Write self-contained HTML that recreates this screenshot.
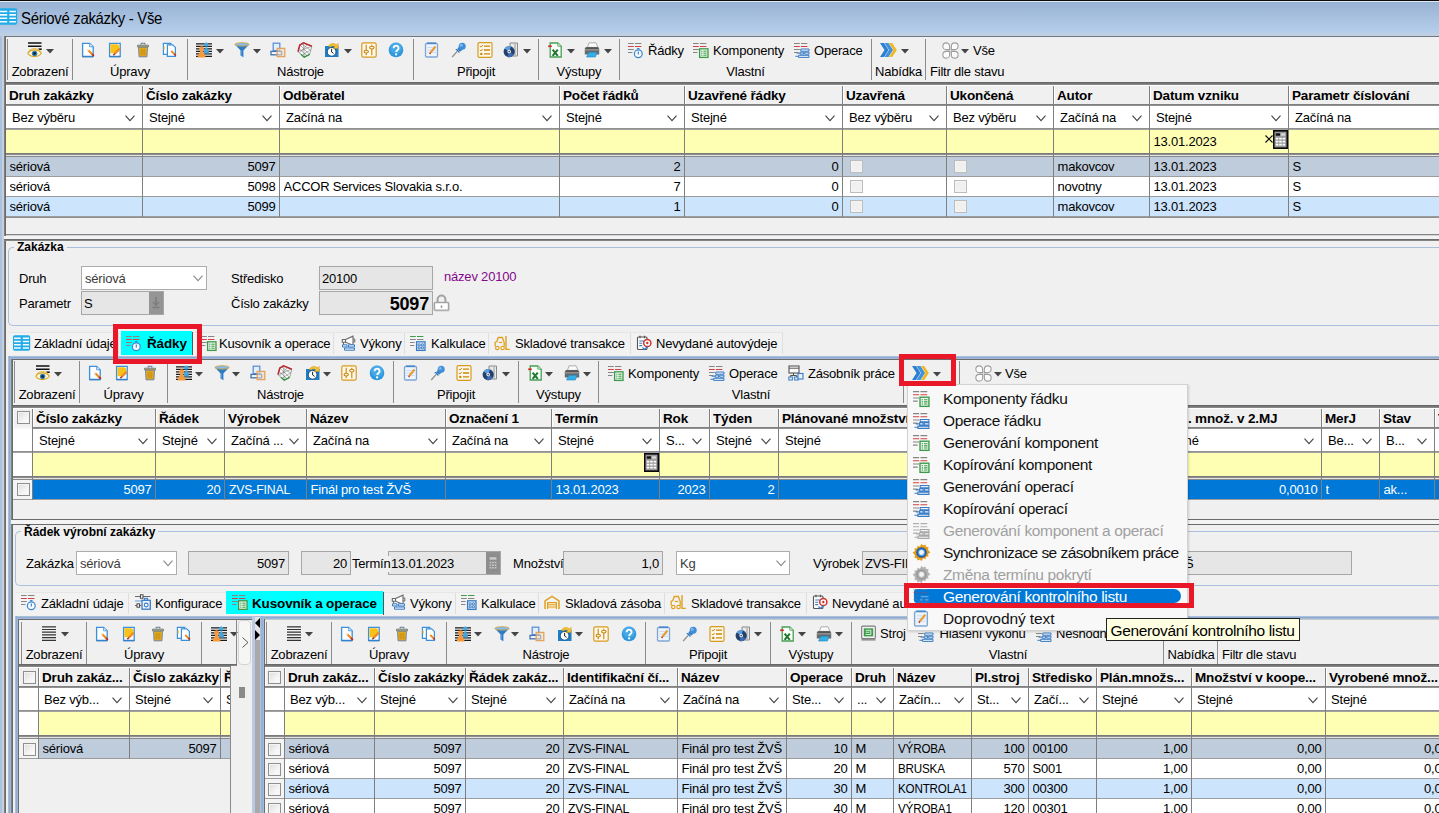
<!DOCTYPE html>
<html><head><meta charset="utf-8"><title>Sériové zakázky - Vše</title>
<style>
html,body{margin:0;padding:0;}
body{width:1439px;height:813px;overflow:hidden;background:#f0f0f0;font-family:"Liberation Sans",sans-serif;font-size:13px;color:#000;}
#app{position:relative;width:1439px;height:813px;overflow:hidden;}
#app div,#app svg{position:absolute;box-sizing:content-box;}
.t{white-space:nowrap;line-height:16px;height:16px;font-size:13px;letter-spacing:-0.2px;margin-top:1px;}
.b{font-weight:bold;font-size:13.5px;letter-spacing:-0.15px;}
.c{text-align:center;}
.i{overflow:visible;}
.clip{overflow:hidden;}
.m{font-size:15.5px;line-height:20px;height:20px;letter-spacing:-0.35px;}

</style></head>
<body>
<div id="app">
<div style="left:0px;top:0px;width:1439px;height:33px;background:linear-gradient(#96b0d3,#a5bedd 45%,#b5ceeb)"></div>
<div style="left:0px;top:33px;width:1439px;height:3px;background:#bfcfe0"></div>
<div style="left:0px;top:0px;width:1439px;height:1px;background:#0c0c0c"></div>
<div style="left:0px;top:1px;width:1439px;height:1px;background:linear-gradient(#3a3a3a 0 50%,#e3e9f2 50%)"></div>
<div style="left:0px;top:36px;width:2px;height:777px;background:#a9c2e0"></div>
<div style="left:2px;top:36px;width:2px;height:777px;background:#c6d0dd"></div>
<div style="left:4px;top:36px;width:1435px;height:1px;background:#6d7986"></div>
<div style="left:4px;top:36px;width:2px;height:777px;background:linear-gradient(90deg,#8a8a8a,#5f5f5f)"></div>
<svg class="i" style="left:0px;top:8px;" width="17" height="17" viewBox="0 0 16 16"><rect x="-1" y="0.300" width="17.200" height="15.400" rx="1.800" fill="#22abe8"/><path d="M0 3.300h6.800M8.800 3.300h6.200M0 6.500h6.800M8.800 6.500h6.200M0 9.700h6.800M8.800 9.700h6.200M0 12.900h6.800M8.800 12.900h6.200" stroke="#f4fbff" stroke-width="1.500"/></svg>
<div class="t" style="left:21px;top:6px;font-size:16.5px;line-height:22px;height:22px;letter-spacing:-0.35px;transform:scaleX(0.905);transform-origin:0 0">Sériové zakázky - Vše</div>
<div style="left:7px;top:39px;width:1px;height:41px;background:#8c8c8c"></div>
<div style="left:72px;top:39px;width:1px;height:41px;background:#8c8c8c"></div>
<div style="left:187px;top:39px;width:1px;height:41px;background:#8c8c8c"></div>
<div style="left:413px;top:39px;width:1px;height:41px;background:#8c8c8c"></div>
<div style="left:538px;top:39px;width:1px;height:41px;background:#8c8c8c"></div>
<div style="left:619px;top:39px;width:1px;height:41px;background:#8c8c8c"></div>
<div style="left:871px;top:39px;width:1px;height:41px;background:#8c8c8c"></div>
<div style="left:925px;top:39px;width:1px;height:41px;background:#8c8c8c"></div>
<svg class="i" style="left:27px;top:42px;" width="16" height="16" viewBox="0 0 16 16"><path d="M1 1h13.5M1 4.2h13.5" stroke="#111" stroke-width="1.6"/><path d="M11.5 7.2h3.2" stroke="#111" stroke-width="1.6"/><path d="M0.8 11.3c2.6-4.6 10.6-4.6 13.6 0c-3.2 4.4-11 4.4-13.6 0z" fill="#fdf6d8" stroke="#d9a520" stroke-width="1.1"/><path d="M1.5 9.2c3-3.4 9-3.6 12 0" fill="none" stroke="#e6b93a" stroke-width="1"/><circle cx="7.6" cy="11.4" r="2.7" fill="#2f7fb4"/><circle cx="7.6" cy="11.4" r="1.3" fill="#0a1a28"/></svg>
<svg class="i" style="left:45.5px;top:49px" width="8" height="4.500" viewBox="0 0 8 4.500"><path d="M0 0h8L4 4.500z" fill="#444"/></svg>
<div class="t c" style="left:-110.0px;width:300px;top:63px;">Zobrazení</div>
<svg class="i" style="left:80px;top:42px;" width="16" height="16" viewBox="0 0 16 16"><path d="M2.6 1.4h7l3.6 3.4v9.6H2.6z" fill="#fdfeff" stroke="#3c8fd9" stroke-width="1.3"/><path d="M9.6 1.4v3.4h3.6" fill="#dcebf9" stroke="#3c8fd9" stroke-width=".8"/><path d="M2.4 14.9h11" stroke="#2f79c0" stroke-width="1"/><path d="M8.3 8.3l4.2 4.2" stroke="#f08a24" stroke-width="2.2"/><path d="M12 12l1.9 1.9" stroke="#b5321f" stroke-width="1.8"/><path d="M7.4 7.4l1.3 1.3" stroke="#f6d7a8" stroke-width="1.6"/></svg>
<svg class="i" style="left:107px;top:42px;" width="16" height="16" viewBox="0 0 16 16"><path d="M2.6 1.4h10.6v13H2.6z" fill="#fdfeff" stroke="#3c8fd9" stroke-width="1.3"/><path d="M3.4 2.2h7.2l1.8 1.8v4.4L8 11.2H3.4z" fill="#f9c21a"/><path d="M2.4 14.9h11" stroke="#2f79c0" stroke-width="1"/><path d="M12.8 6.6l-5 5" stroke="#f08a24" stroke-width="2.2"/><path d="M7.9 11.5l-1.6 1.7" stroke="#b5321f" stroke-width="1.6"/></svg>
<svg class="i" style="left:135px;top:42px;" width="16" height="16" viewBox="0 0 16 16"><path d="M6.2 2.6V1.2h3.6v1.4" fill="none" stroke="#6b7f96" stroke-width="1.1"/><path d="M2.6 3.2h10.8v1.8H2.6z" fill="#f4bd2a" stroke="#6b7f96" stroke-width="1"/><path d="M3.6 5.2h8.8l-.5 9.6H4.1z" fill="#f0b31e" stroke="#6b7f96" stroke-width="1"/><path d="M6.1 6.6v7M8 6.6v7M9.9 6.6v7" stroke="#b98412" stroke-width="1"/></svg>
<svg class="i" style="left:162px;top:42px;" width="16" height="16" viewBox="0 0 16 16"><path d="M1.4 1.4h7.4v11H1.4z" fill="#fdfeff" stroke="#3c8fd9" stroke-width="1.2"/><path d="M2.2 4.5v3" stroke="#f4bd2a" stroke-width="1.2"/><path d="M5.4 2.8h5.2l2.8 2.6v9H5.4z" fill="#fdfeff" stroke="#3c8fd9" stroke-width="1.2"/><path d="M9.3 9l3.4 3.4" stroke="#f08a24" stroke-width="2"/><path d="M12.3 12l1.6 1.6" stroke="#b5321f" stroke-width="1.6"/></svg>
<div class="t c" style="left:-20.0px;width:300px;top:63px;">Úpravy</div>
<svg class="i" style="left:196px;top:42px;" width="16" height="16" viewBox="0 0 16 16"><path d="M0 1.8h16M0 4.3h16M0 6.8h16M0 9.3h16M0 11.8h16M0 14.3h16" stroke="#1a1a1a" stroke-width="1.35"/><circle cx="10.3" cy="2.6" r="2.2" fill="#45a6dc"/><path d="M7.4 11.5c.3-2.8 1.5-3.6 2-6.2h1.8c.5 2.6 1.7 3.4 2 6.2z" fill="#45a6dc"/><circle cx="5.6" cy="6.6" r="2.4" fill="#f7993a"/><path d="M1.6 15.6c.3-3 2-4 2.6-6.8h2.8c.6 2.8 2.3 3.8 2.6 6.8z" fill="#f7993a"/></svg>
<svg class="i" style="left:215.5px;top:49px" width="8" height="4.500" viewBox="0 0 8 4.500"><path d="M0 0h8L4 4.500z" fill="#444"/></svg>
<svg class="i" style="left:234px;top:42px;" width="16" height="16" viewBox="0 0 16 16"><path d="M0.9 2.4L6.6 8.6v5l2.8 1.6V8.6l5.7-6.2z" fill="#2f7cc4"/><path d="M6.6 8.6v5l1.2.7V8.6z" fill="#5aa0e0"/><ellipse cx="8" cy="2.4" rx="7.1" ry="1.7" fill="#86bdee" stroke="#d0a744" stroke-width="0.9"/></svg>
<svg class="i" style="left:252.5px;top:49px" width="8" height="4.500" viewBox="0 0 8 4.500"><path d="M0 0h8L4 4.500z" fill="#444"/></svg>
<svg class="i" style="left:270px;top:42px;" width="16" height="16" viewBox="0 0 16 16"><rect x="3.2" y="1.2" width="6.6" height="7.4" fill="#e4eefa" stroke="#5b92d8" stroke-width="1.3"/><rect x="1" y="9.4" width="10.6" height="3.4" fill="#f3f7fc" stroke="#3f73b5" stroke-width="1.3"/><rect x="7.2" y="6.4" width="7.6" height="8.2" fill="#f6dfc0" fill-opacity=".55" stroke="#e5a25c" stroke-width="1.3"/></svg>
<svg class="i" style="left:297px;top:42px;" width="16" height="16" viewBox="0 0 16 16"><path d="M6.5 0.8l8.3 3.4l-2.2 8.2l-5.4 2.8L1 9.6L2.8 3z" fill="#fcfcfc" stroke="#8b8b8b" stroke-width="0.8"/><path d="M1 9.6L2.8 3l3.7-2.2l8.3 3.4" fill="none" stroke="#c4232b" stroke-width="1.5"/><path d="M4 12.2l3.2 3l5.4-2.8" fill="none" stroke="#2b9a3c" stroke-width="1.5"/><path d="M2.8 3l9.8 9.4M14.8 4.2L1 9.6M6.5.8l.7 14.4M4.6 1.9l9.2 6.4M10.6 2.5L2.6 11M12.7 8.3L5 13.4M1.9 6.3l8 7.4" stroke="#6f6f6f" stroke-width="0.55"/></svg>
<svg class="i" style="left:324px;top:42px;" width="16" height="16" viewBox="0 0 16 16"><rect x="1" y="4" width="13.5" height="11" fill="#1f7fc4"/><circle cx="7.6" cy="9.8" r="4.4" fill="#fff" stroke="#0f4f85" stroke-width="1"/><path d="M7.6 6.8v3.2l2 1.4" fill="none" stroke="#222" stroke-width="1"/><path d="M4.5 4.2C6 1.2 10 .8 12.5 3l1.6-1.6v5h-5L10.8 4.7C9.5 3.4 7.5 3.6 6.4 5z" fill="#f7c32e" stroke="#c98f0e" stroke-width=".5"/></svg>
<svg class="i" style="left:343.5px;top:49px" width="8" height="4.500" viewBox="0 0 8 4.500"><path d="M0 0h8L4 4.500z" fill="#444"/></svg>
<svg class="i" style="left:361px;top:42px;" width="16" height="16" viewBox="0 0 16 16"><rect x="0.8" y="0.8" width="14.4" height="14.4" rx="1.6" fill="#fdf8ea" stroke="#d89a1e" stroke-width="1.2"/><path d="M5.2 2.8v10.4M10.8 2.8v10.4" stroke="#c9860e" stroke-width="1.1"/><ellipse cx="5.2" cy="9.6" rx="2.2" ry="1.4" fill="#fdf8ea" stroke="#c9860e" stroke-width="1.1"/><ellipse cx="10.8" cy="5.6" rx="2.2" ry="1.4" fill="#fdf8ea" stroke="#c9860e" stroke-width="1.1"/></svg>
<svg class="i" style="left:388px;top:42px;" width="16" height="16" viewBox="0 0 16 16"><circle cx="8" cy="8" r="7.3" fill="#2f97dc"/><circle cx="8" cy="6" r="6" fill="#56b4ee" fill-opacity=".55"/><path d="M5.6 6.2c0-3.4 5-3.4 5 0c0 1.8-2.4 1.8-2.4 3.8" fill="none" stroke="#fff" stroke-width="1.9"/><circle cx="8.1" cy="12.4" r="1.15" fill="#fff"/></svg>
<div class="t c" style="left:150.5px;width:300px;top:63px;">Nástroje</div>
<svg class="i" style="left:424px;top:42px;" width="16" height="16" viewBox="0 0 16 16"><rect x="1.5" y="1.5" width="12" height="13.5" rx="1" fill="#eef4fb" stroke="#7fa7d6" stroke-width="1.3"/><path d="M3 1.2h9" stroke="#4a86c8" stroke-width="1.6"/><path d="M3.5 5.5h8M3.5 8h8M3.5 10.5h8" stroke="#c3d5ea" stroke-width=".8"/><path d="M6.5 10.5l5-6" stroke="#e89b2e" stroke-width="2"/><path d="M6.5 10.5l-.8 1.6" stroke="#c03a2b" stroke-width="1.4"/></svg>
<svg class="i" style="left:451px;top:42px;" width="16" height="16" viewBox="0 0 16 16"><path d="M1.2 15L6.2 9.4" stroke="#8f8f8f" stroke-width="1.3"/><path d="M4.4 7.2c1.8-.6 4.6 2.2 4 4z" fill="#2a6fb0"/><path d="M6.2 7l2.2-2.8l3.4 3.4L9 9.8z" fill="#3683c8"/><circle cx="11.2" cy="4.2" r="3.5" fill="#3f8fd8"/><circle cx="10.2" cy="3.2" r="1.5" fill="#7db8ee"/></svg>
<svg class="i" style="left:477px;top:42px;" width="16" height="16" viewBox="0 0 16 16"><rect x="1" y="0.7" width="14" height="14.6" rx="1.2" fill="#fdf8ea" stroke="#d89a1e" stroke-width="1.2"/><path d="M7 4.1h6M7 8h6M7 11.9h6" stroke="#c9860e" stroke-width="1.3"/><path d="M2.8 4l1.1 1.1L5.8 3M2.8 7.9L3.9 9l1.9-2.1" fill="none" stroke="#c9860e" stroke-width="1"/><circle cx="4.3" cy="11.9" r="1.2" fill="#c9860e"/></svg>
<svg class="i" style="left:503px;top:42px;" width="16" height="16" viewBox="0 0 16 16"><path d="M7 1h7.5v13H7z" fill="#e9e9e9" stroke="#8a8a8a" stroke-width="1"/><path d="M12 1v13" stroke="#b5b5b5" stroke-width="1.5"/><circle cx="6.2" cy="9.6" r="5.6" fill="#24406e"/><path d="M6.2 9.6L1.6 6.6A5.6 5.6 0 0 1 8 4.3z" fill="#5aa0e0"/><path d="M6.2 9.6l4.6 3A5.6 5.6 0 0 1 4.4 14.9z" fill="#3b6cb0"/><circle cx="6.2" cy="9.6" r="1.8" fill="#f1f1f1"/><circle cx="6.2" cy="9.6" r=".8" fill="#24406e"/></svg>
<svg class="i" style="left:522.5px;top:49px" width="8" height="4.500" viewBox="0 0 8 4.500"><path d="M0 0h8L4 4.500z" fill="#444"/></svg>
<div class="t c" style="left:326.0px;width:300px;top:63px;">Připojit</div>
<svg class="i" style="left:547px;top:42px;" width="16" height="16" viewBox="0 0 16 16"><path d="M3.2 1h7.6l3.400 3.200V15H3.200z" fill="#fdfffd" stroke="#45a052" stroke-width="1.3"/><path d="M10.800 1v3.200h3.400" fill="#d9efdb" stroke="#45a052" stroke-width=".8"/><rect x="1.200" y="3.400" width="3.600" height="1.700" fill="#d92a2a"/><path d="M5.600 7.600l5.200 6.200M10.800 7.600l-5.200 6.200" stroke="#1f7a31" stroke-width="2.100"/></svg>
<svg class="i" style="left:566.5px;top:49px" width="8" height="4.500" viewBox="0 0 8 4.500"><path d="M0 0h8L4 4.500z" fill="#444"/></svg>
<svg class="i" style="left:584px;top:42px;" width="16" height="16" viewBox="0 0 16 16"><path d="M5 0.8h7l2 4.6H3.4z" fill="#fafafa" stroke="#9a9a9a" stroke-width=".8"/><path d="M.8 7c0-1.2.8-2 2-2h10.4c1.2 0 2 .8 2 2v5.400H.8z" fill="#6a6a6a"/><path d="M.8 7.800h14.400" stroke="#9c9c9c" stroke-width="1.2"/><path d="M2 6.200h12" stroke="#4a4a4a" stroke-width="1"/><path d="M4.800 10.200h8.400L11.400 15H2.600z" fill="#35aee6" stroke="#1d84bd" stroke-width=".6"/></svg>
<svg class="i" style="left:603.5px;top:49px" width="8" height="4.500" viewBox="0 0 8 4.500"><path d="M0 0h8L4 4.500z" fill="#444"/></svg>
<div class="t c" style="left:429.0px;width:300px;top:63px;">Výstupy</div>
<svg class="i" style="left:628px;top:42px;" width="16" height="16" viewBox="0 0 16 16"><path d="M0 1.500h5.800M7 1.500h6.400M0 7.500h5.800M0 10.500h4.400" stroke="#858585" stroke-width="1.100"/><path d="M0 4.500h5.800M7 4.500h6.400" stroke="#d3403f" stroke-width="1.100"/><circle cx="10.300" cy="11.700" r="3.900" fill="#f7fbff" stroke="#3a86d0" stroke-width="1.200"/><path d="M10.300 9.500v2.900M9.100 6.700h2.400" stroke="#3a86d0" stroke-width="1.200"/></svg>
<div class="t" style="left:648px;top:42px;">Řádky</div>
<svg class="i" style="left:693px;top:42px;" width="16" height="16" viewBox="0 0 16 16"><path d="M0 1.500h5.800M7 1.500h6.400M0 7.500h5.800M0 10.500h4.400" stroke="#858585" stroke-width="1.100"/><path d="M0 4.500h5.800M7 4.500h6.400" stroke="#d3403f" stroke-width="1.100"/><rect x="6.600" y="6.800" width="8.400" height="8.600" fill="#eaf6ea" stroke="#3d9a4b" stroke-width="1.300"/><path d="M8.200 9.200h1.200M10.400 9.200h3.200M8.200 11.200h1.200M10.400 11.200h3.200M8.200 13.200h1.200M10.400 13.200h3.200" stroke="#3d9a4b" stroke-width="1"/></svg>
<div class="t" style="left:713px;top:42px;">Komponenty</div>
<svg class="i" style="left:794px;top:42px;" width="16" height="16" viewBox="0 0 16 16"><path d="M0 1.500h5.800M7 1.500h6.400M0 7.500h5.800M0 10.500h4.400" stroke="#858585" stroke-width="1.100"/><path d="M0 4.500h5.800M7 4.500h6.400" stroke="#d3403f" stroke-width="1.100"/><path d="M6.800 7h8.200v2.200H6.800zM6.200 10.200h3.300v2H6.200zM10.700 10.200h4.300v2h-4.300zM4.600 13.300h10.400v2.100H4.600z" fill="#e7f0fa" stroke="#3a7cc4" stroke-width="1"/><path d="M2.600 11.200h3.600M1.400 14.300h3.200" stroke="#3a7cc4" stroke-width="1"/></svg>
<div class="t" style="left:814px;top:42px;">Operace</div>
<div class="t c" style="left:595.5px;width:300px;top:63px;">Vlastní</div>
<svg class="i" style="left:880px;top:42px;" width="16" height="16" viewBox="0 0 16 16"><path d="M0 1h4l4.5 7L4 15H0l4.5-7z" fill="#2d7fd0"/><path d="M4.5 1h4L13 8l-4.5 7h-4L9 8z" fill="#3d93e0"/><path d="M9 1h3.2L16.8 8l-4.6 7H9l4.5-7z" fill="#f3b61f"/></svg>
<svg class="i" style="left:900.5px;top:49px" width="8" height="4.500" viewBox="0 0 8 4.500"><path d="M0 0h8L4 4.500z" fill="#444"/></svg>
<div class="t c" style="left:748.5px;width:300px;top:63px;">Nabídka</div>
<svg class="i" style="left:941.5px;top:41.5px;" width="17" height="17" viewBox="0 0 16 16"><path d="M7.200 7.200V4a3.200 3.200 0 1 0-3.200 3.200zM8.800 7.200H12A3.200 3.200 0 1 0 8.800 4zM8.800 8.800V12A3.200 3.200 0 1 0 12 8.800zM7.200 8.800H4A3.200 3.200 0 1 0 7.200 12z" fill="#fbfbfb" stroke="#9c9c9c" stroke-width="1"/></svg>
<svg class="i" style="left:960.5px;top:49px" width="8" height="4.500" viewBox="0 0 8 4.500"><path d="M0 0h8L4 4.500z" fill="#444"/></svg>
<div class="t" style="left:973px;top:42px;">Vše</div>
<div class="t" style="left:930px;top:63px;">Filtr dle stavu</div>
<div style="left:6px;top:82px;width:1433px;height:3px;background:linear-gradient(#5f5f5f,#8f8f8f)"></div>
<div style="left:6px;top:85px;width:1433px;height:19px;background:#f0f0f0"></div>
<div style="left:6px;top:104px;width:1433px;height:2px;background:linear-gradient(#777,#9a9a9a)"></div>
<div style="left:6px;top:106px;width:1433px;height:22px;background:#fff"></div>
<div style="left:6px;top:128px;width:1433px;height:2px;background:linear-gradient(#8a8a8a,#a8a8a8)"></div>
<div style="left:6px;top:130px;width:1433px;height:23px;background:#ffffb4"></div>
<div style="left:6px;top:153px;width:1433px;height:4px;background:linear-gradient(#7a7a7a 0 25%,#8e8e8e 25% 50%,#e4e4e4 50% 75%,#8a8a8a 75%)"></div>
<div style="left:6px;top:157px;width:1433px;height:19px;background:#bfccdb"></div>
<div style="left:6px;top:176px;width:1433px;height:1px;background:#9c9c9c"></div>
<div style="left:6px;top:177px;width:1433px;height:19px;background:#fff"></div>
<div style="left:6px;top:196px;width:1433px;height:1px;background:#9c9c9c"></div>
<div style="left:6px;top:197px;width:1433px;height:19px;background:#cce4fc"></div>
<div style="left:6px;top:216px;width:1433px;height:1px;background:#9c9c9c"></div>
<div style="left:142px;top:85px;width:1px;height:132px;background:#7f7f7f"></div>
<div style="left:143px;top:85px;width:1px;height:19px;background:#fff"></div>
<div style="left:279px;top:85px;width:1px;height:132px;background:#7f7f7f"></div>
<div style="left:280px;top:85px;width:1px;height:19px;background:#fff"></div>
<div style="left:559px;top:85px;width:1px;height:132px;background:#7f7f7f"></div>
<div style="left:560px;top:85px;width:1px;height:19px;background:#fff"></div>
<div style="left:684px;top:85px;width:1px;height:132px;background:#7f7f7f"></div>
<div style="left:685px;top:85px;width:1px;height:19px;background:#fff"></div>
<div style="left:842px;top:85px;width:1px;height:132px;background:#7f7f7f"></div>
<div style="left:843px;top:85px;width:1px;height:19px;background:#fff"></div>
<div style="left:946px;top:85px;width:1px;height:132px;background:#7f7f7f"></div>
<div style="left:947px;top:85px;width:1px;height:19px;background:#fff"></div>
<div style="left:1053px;top:85px;width:1px;height:132px;background:#7f7f7f"></div>
<div style="left:1054px;top:85px;width:1px;height:19px;background:#fff"></div>
<div style="left:1149px;top:85px;width:1px;height:132px;background:#7f7f7f"></div>
<div style="left:1150px;top:85px;width:1px;height:19px;background:#fff"></div>
<div style="left:1288px;top:85px;width:1px;height:132px;background:#7f7f7f"></div>
<div style="left:1289px;top:85px;width:1px;height:19px;background:#fff"></div>
<div style="left:6px;top:85px;width:1px;height:19px;background:#fff"></div>
<div style="left:6px;top:85px;width:1433px;height:1px;background:#fff"></div>
<div class="t b clip" style="left:9px;top:87px;width:133px">Druh zakázky</div>
<div class="t clip" style="left:12px;top:109px;width:130px">Bez výběru</div>
<svg class="i" style="left:125px;top:115px" width="10" height="7" viewBox="0 0 10 7"><path d="M0.500 0.600L5 5.600l4.500-5" fill="none" stroke="#444" stroke-width="1.100"/></svg>
<div class="t clip" style="left:9.5px;top:158px;width:132.5px;color:#000">sériová</div>
<div class="t clip" style="left:9.5px;top:178px;width:132.5px;color:#000">sériová</div>
<div class="t clip" style="left:9.5px;top:198px;width:132.5px;color:#000">sériová</div>
<div class="t b clip" style="left:146px;top:87px;width:133px">Číslo zakázky</div>
<div class="t clip" style="left:149px;top:109px;width:130px">Stejné</div>
<svg class="i" style="left:262px;top:115px" width="10" height="7" viewBox="0 0 10 7"><path d="M0.500 0.600L5 5.600l4.500-5" fill="none" stroke="#444" stroke-width="1.100"/></svg>
<div class="t" style="left:143px;top:158px;width:132.5px;text-align:right;color:#000">5097</div>
<div class="t" style="left:143px;top:178px;width:132.5px;text-align:right;color:#000">5098</div>
<div class="t" style="left:143px;top:198px;width:132.5px;text-align:right;color:#000">5099</div>
<div class="t b clip" style="left:283px;top:87px;width:276px">Odběratel</div>
<div class="t clip" style="left:286px;top:109px;width:273px">Začíná na</div>
<svg class="i" style="left:542px;top:115px" width="10" height="7" viewBox="0 0 10 7"><path d="M0.500 0.600L5 5.600l4.500-5" fill="none" stroke="#444" stroke-width="1.100"/></svg>
<div class="t clip" style="left:283.5px;top:178px;width:275.5px;color:#000">ACCOR Services Slovakia s.r.o.</div>
<div class="t b clip" style="left:563px;top:87px;width:121px">Počet řádků</div>
<div class="t clip" style="left:566px;top:109px;width:118px">Stejné</div>
<svg class="i" style="left:667px;top:115px" width="10" height="7" viewBox="0 0 10 7"><path d="M0.500 0.600L5 5.600l4.500-5" fill="none" stroke="#444" stroke-width="1.100"/></svg>
<div class="t" style="left:560px;top:158px;width:120.5px;text-align:right;color:#000">2</div>
<div class="t" style="left:560px;top:178px;width:120.5px;text-align:right;color:#000">7</div>
<div class="t" style="left:560px;top:198px;width:120.5px;text-align:right;color:#000">1</div>
<div class="t b clip" style="left:688px;top:87px;width:154px">Uzavřené řádky</div>
<div class="t clip" style="left:691px;top:109px;width:151px">Stejné</div>
<svg class="i" style="left:825px;top:115px" width="10" height="7" viewBox="0 0 10 7"><path d="M0.500 0.600L5 5.600l4.500-5" fill="none" stroke="#444" stroke-width="1.100"/></svg>
<div class="t" style="left:685px;top:158px;width:153.5px;text-align:right;color:#000">0</div>
<div class="t" style="left:685px;top:178px;width:153.5px;text-align:right;color:#000">0</div>
<div class="t" style="left:685px;top:198px;width:153.5px;text-align:right;color:#000">0</div>
<div class="t b clip" style="left:846px;top:87px;width:100px">Uzavřená</div>
<div class="t clip" style="left:849px;top:109px;width:97px">Bez výběru</div>
<svg class="i" style="left:929px;top:115px" width="10" height="7" viewBox="0 0 10 7"><path d="M0.500 0.600L5 5.600l4.500-5" fill="none" stroke="#444" stroke-width="1.100"/></svg>
<div style="left:850px;top:160px;width:11px;height:11px;border:1px solid #bcbcbc;background:#f0f0f0;box-shadow:inset 0 0 0 1px #f4f4f4"></div>
<div style="left:850px;top:180px;width:11px;height:11px;border:1px solid #bcbcbc;background:#f0f0f0;box-shadow:inset 0 0 0 1px #f4f4f4"></div>
<div style="left:850px;top:200px;width:11px;height:11px;border:1px solid #bcbcbc;background:#f0f0f0;box-shadow:inset 0 0 0 1px #f4f4f4"></div>
<div class="t b clip" style="left:950px;top:87px;width:103px">Ukončená</div>
<div class="t clip" style="left:953px;top:109px;width:100px">Bez výběru</div>
<svg class="i" style="left:1036px;top:115px" width="10" height="7" viewBox="0 0 10 7"><path d="M0.500 0.600L5 5.600l4.500-5" fill="none" stroke="#444" stroke-width="1.100"/></svg>
<div style="left:954px;top:160px;width:11px;height:11px;border:1px solid #bcbcbc;background:#f0f0f0;box-shadow:inset 0 0 0 1px #f4f4f4"></div>
<div style="left:954px;top:180px;width:11px;height:11px;border:1px solid #bcbcbc;background:#f0f0f0;box-shadow:inset 0 0 0 1px #f4f4f4"></div>
<div style="left:954px;top:200px;width:11px;height:11px;border:1px solid #bcbcbc;background:#f0f0f0;box-shadow:inset 0 0 0 1px #f4f4f4"></div>
<div class="t b clip" style="left:1057px;top:87px;width:92px">Autor</div>
<div class="t clip" style="left:1060px;top:109px;width:89px">Začíná na</div>
<svg class="i" style="left:1132px;top:115px" width="10" height="7" viewBox="0 0 10 7"><path d="M0.500 0.600L5 5.600l4.500-5" fill="none" stroke="#444" stroke-width="1.100"/></svg>
<div class="t clip" style="left:1057.5px;top:158px;width:91.5px;color:#000">makovcov</div>
<div class="t clip" style="left:1057.5px;top:178px;width:91.5px;color:#000">novotny</div>
<div class="t clip" style="left:1057.5px;top:198px;width:91.5px;color:#000">makovcov</div>
<div class="t b clip" style="left:1153px;top:87px;width:135px">Datum vzniku</div>
<div class="t clip" style="left:1156px;top:109px;width:132px">Stejné</div>
<svg class="i" style="left:1271px;top:115px" width="10" height="7" viewBox="0 0 10 7"><path d="M0.500 0.600L5 5.600l4.500-5" fill="none" stroke="#444" stroke-width="1.100"/></svg>
<div class="t clip" style="left:1153.5px;top:158px;width:134.5px;color:#000">13.01.2023</div>
<div class="t clip" style="left:1153.5px;top:178px;width:134.5px;color:#000">13.01.2023</div>
<div class="t clip" style="left:1153.5px;top:198px;width:134.5px;color:#000">13.01.2023</div>
<div class="t b clip" style="left:1292px;top:87px;width:147px">Parametr číslování</div>
<div class="t clip" style="left:1295px;top:109px;width:144px">Začíná na</div>
<div class="t clip" style="left:1292.5px;top:158px;width:146.5px;color:#000">S</div>
<div class="t clip" style="left:1292.5px;top:178px;width:146.5px;color:#000">S</div>
<div class="t clip" style="left:1292.5px;top:198px;width:146.5px;color:#000">S</div>
<div class="t" style="left:1153.5px;top:133px;">13.01.2023</div>
<svg class="i" style="left:1265px;top:135px" width="8" height="8" viewBox="0 0 8 8"><path d="M0.500 0.500l7 7M7.500 0.500l-7 7" stroke="#111" stroke-width="1.200"/></svg>
<svg class="i" style="left:1273px;top:130px;" width="15" height="19" viewBox="0 0 14 16" preserveAspectRatio="none"><rect x="0.700" y="0.700" width="12.600" height="14.600" fill="#9a9a9a" stroke="#0a0a0a" stroke-width="1.400"/><rect x="2.600" y="2.800" width="4" height="2" fill="#111"/><rect x="7.400" y="2.800" width="4" height="2" fill="#d8d8d8"/><path d="M2.600 7.200h8.800M2.600 9.800h8.800M2.600 12.400h8.800" stroke="#fff" stroke-width="1.500" stroke-dasharray="2.400 0.800"/></svg>
<div style="left:6px;top:217px;width:1433px;height:1px;background:#8f8f8f"></div>
<div style="left:6px;top:234px;width:1433px;height:1px;background:#80858c"></div>
<div style="left:6px;top:235px;width:1433px;height:1px;background:#d4d4d4"></div>
<div style="left:4px;top:236px;width:1435px;height:3px;background:#f4f4f4"></div>
<div style="left:4px;top:239px;width:1435px;height:2px;background:linear-gradient(#5f5f5f,#8f8f8f)"></div>
<div style="left:8px;top:247px;width:1431px;height:77px;border:1px solid #a9bfdc;border-radius:5px;border-right:none;border-top-right-radius:0;border-bottom-right-radius:0"></div>
<div class="t b" style="left:14px;top:240px;background:#f0f0f0;padding:0 3px;font-size:12px;letter-spacing:0;height:12px;line-height:12px">Zakázka</div>
<div class="t" style="left:19px;top:270px;">Druh</div>
<div style="left:81px;top:266px;width:124px;height:22px;border:1px solid #adadad;background:#fff"></div>
<div class="t" style="left:85px;top:270px;color:#3c3c3c">sériová</div>
<svg class="i" style="left:192.5px;top:275px" width="10" height="7" viewBox="0 0 10 7"><path d="M0.500 0.600L5 5.600l4.500-5" fill="none" stroke="#8a8a8a" stroke-width="1.100"/></svg>
<div class="t" style="left:231px;top:270px;">Středisko</div>
<div style="left:319px;top:266px;width:112px;height:22px;border:1px solid #a6a6a6;background:#e6e6e6"></div>
<div class="t" style="left:322px;top:270px;">20100</div>
<div class="t" style="left:444px;top:268px;color:#85088c">název 20100</div>
<div class="t" style="left:19px;top:295px;">Parametr</div>
<div style="left:81px;top:291px;width:81px;height:22px;border:1px solid #a6a6a6;background:#e6e6e6"></div>
<div class="t" style="left:84px;top:295px;">S</div>
<div style="left:149px;top:292px;width:14px;height:22px;background:#959595"></div>
<svg class="i" style="left:152px;top:297px" width="8" height="12" viewBox="0 0 8 12"><path d="M4 0v8M1 5l3 3l3-3M0.5 10.5h7" fill="none" stroke="#7d7d7d" stroke-width="1.6"/></svg>
<div class="t" style="left:231px;top:295px;">Číslo zakázky</div>
<div style="left:319px;top:291px;width:112px;height:22px;border:1px solid #a6a6a6;background:#e6e6e6"></div>
<div class="t b" style="left:319px;top:292px;width:110px;text-align:right;font-size:18px;line-height:22px;height:22px;letter-spacing:-0.2px">5097</div>
<svg class="i" style="left:433px;top:293px;" width="17" height="19" viewBox="0 0 16 16"><path d="M4.300 8V5.200a3.700 3.700 0 0 1 7.400 0V8" fill="none" stroke="#a3a3a3" stroke-width="1.900"/><rect x="1.300" y="8" width="13.400" height="7.300" rx="0.800" fill="#fff" stroke="#a3a3a3" stroke-width="1.500"/><path d="M2 16h13.400" stroke="#c8c8c8" stroke-width="0.800"/><path d="M8 10.700v2.400" stroke="#9a9a9a" stroke-width="1.500"/></svg>
<div style="left:9px;top:332px;width:774px;height:23px;background:#f2f2f2;box-shadow:inset 0 1px 0 #e6e6e6"></div>
<svg class="i" style="left:14px;top:335px;" width="16" height="16" viewBox="0 0 16 16"><rect x="-1" y="0.300" width="17.200" height="15.400" rx="1.800" fill="#22abe8"/><path d="M0 3.300h6.800M8.800 3.300h6.200M0 6.500h6.800M8.800 6.500h6.200M0 9.700h6.800M8.800 9.700h6.200M0 12.900h6.800M8.800 12.900h6.200" stroke="#f4fbff" stroke-width="1.500"/></svg>
<div class="t" style="left:34px;top:335px;">Základní údaje</div>
<div style="left:118px;top:333px;width:1px;height:21px;background:#dedede"></div>
<div style="left:121px;top:331px;width:71px;height:24px;background:#00ffff"></div>
<div style="left:192px;top:332px;width:1px;height:23px;background:#555"></div>
<svg class="i" style="left:126px;top:335px;" width="16" height="16" viewBox="0 0 16 16"><path d="M0 1.500h5.800M7 1.500h6.400M0 7.500h5.800M0 10.500h4.400" stroke="#858585" stroke-width="1.100"/><path d="M0 4.500h5.800M7 4.500h6.400" stroke="#d3403f" stroke-width="1.100"/><circle cx="10.300" cy="11.700" r="3.900" fill="#f7fbff" stroke="#3a86d0" stroke-width="1.200"/><path d="M10.300 9.500v2.900M9.100 6.700h2.400" stroke="#3a86d0" stroke-width="1.200"/></svg>
<div class="t b" style="left:147px;top:335px;">Řádky</div>
<svg class="i" style="left:201px;top:335px;" width="16" height="16" viewBox="0 0 16 16"><path d="M0 1.500h5.800M7 1.500h6.400M0 7.500h5.800M0 10.500h4.400" stroke="#858585" stroke-width="1.100"/><path d="M0 4.500h5.800M7 4.500h6.400" stroke="#d3403f" stroke-width="1.100"/><rect x="6.600" y="6.800" width="8.400" height="8.600" fill="#eaf6ea" stroke="#3d9a4b" stroke-width="1.300"/><path d="M8.200 9.200h1.200M10.400 9.200h3.200M8.200 11.200h1.200M10.400 11.200h3.200M8.200 13.200h1.200M10.400 13.200h3.200" stroke="#3d9a4b" stroke-width="1"/></svg>
<div class="t" style="left:219px;top:335px;">Kusovník a operace</div>
<div style="left:333px;top:333px;width:1px;height:21px;background:#dedede"></div>
<svg class="i" style="left:340px;top:335px;" width="16" height="16" viewBox="0 0 16 16"><path d="M5.500 4.500l7.500-3.300v9l-7.500-3z" fill="#fdfdfd" stroke="#6a6a6a" stroke-width="1.100"/><path d="M2.300 4.500h3.200v2.700H2.300z" fill="#fdfdfd" stroke="#6a6a6a" stroke-width="1.100"/><path d="M13 4h1.800v3H13" fill="none" stroke="#6a6a6a" stroke-width="1"/><path d="M3.500 7.200v3" stroke="#6a6a6a" stroke-width="1.100"/><path d="M2.500 9.800h4.500v2.200H2.500zM8.500 9.800h6v2.200h-6zM4.500 13h10v2.200h-10z" fill="#e7f0fa" stroke="#3a7cc4" stroke-width="1"/></svg>
<div class="t" style="left:360px;top:335px;">Výkony</div>
<div style="left:404px;top:333px;width:1px;height:21px;background:#dedede"></div>
<svg class="i" style="left:410px;top:335px;" width="16" height="16" viewBox="0 0 16 16"><path d="M0 4.500h5.800M7 4.500h6.400M0 7.500h4.600M0 10.500h4.400" stroke="#858585" stroke-width="1.100"/><path d="M0 1.500h5.800M7 1.500h6.400" stroke="#3d9a4b" stroke-width="1.100"/><rect x="6.600" y="6.800" width="8.400" height="8.600" fill="#e7f0fa" stroke="#3a7cc4" stroke-width="1.300"/><path d="M8.200 8.900h2v1.900h-2zM11.400 8.900h2v1.900h-2zM8.200 11.900h2v1.900h-2zM11.400 11.900h2v1.900h-2z" fill="#fff" stroke="#3a7cc4" stroke-width=".9"/></svg>
<div class="t" style="left:431px;top:335px;">Kalkulace</div>
<div style="left:488px;top:333px;width:1px;height:21px;background:#dedede"></div>
<svg class="i" style="left:494px;top:335px;" width="16" height="16" viewBox="0 0 16 16"><path d="M1.200 11.500V7.200l1.600-.400L4.200 2.500h4.200l1.800 5v4" fill="none" stroke="#e0a022" stroke-width="1.300"/><path d="M4.800 7.500h3.400" stroke="#e0a022" stroke-width="1.200"/><circle cx="3.300" cy="13" r="1.700" fill="#fff" stroke="#e0a022" stroke-width="1.200"/><circle cx="8.600" cy="13" r="1.700" fill="#fff" stroke="#e0a022" stroke-width="1.200"/><path d="M12 1v13.400h3.800" fill="none" stroke="#e0a022" stroke-width="1.400"/></svg>
<div class="t" style="left:515px;top:335px;">Skladové transakce</div>
<div style="left:630px;top:333px;width:1px;height:21px;background:#dedede"></div>
<svg class="i" style="left:636px;top:335px;" width="16" height="16" viewBox="0 0 16 16"><rect x="1.5" y="2" width="9.5" height="12.5" rx="1" fill="#fff" stroke="#555" stroke-width="1.1"/><path d="M4 .8v2.4M8.5 .8v2.4" stroke="#555" stroke-width="1.2"/><path d="M3.2 6h5M3.2 8.3h3M3.2 10.6h3" stroke="#3a7cc4" stroke-width="1.1"/><circle cx="11.3" cy="8" r="3.6" fill="#fff" stroke="#d0322d" stroke-width="1.5"/><circle cx="11.3" cy="8" r="1.2" fill="#d0322d"/><path d="M6.5 12.5l2 2l3-3" fill="none" stroke="#3a7cc4" stroke-width="1.2"/></svg>
<div class="t" style="left:656px;top:335px;">Nevydané autovýdeje</div>
<div style="left:782px;top:333px;width:1px;height:21px;background:#dedede"></div>
<div style="left:8px;top:356px;width:1431px;height:3px;background:linear-gradient(#b5c8e1,#8fabd0,#a9bfdc)"></div>
<div style="left:8px;top:356px;width:3px;height:457px;background:linear-gradient(90deg,#b5c8e1,#8fabd0,#a9bfdc)"></div>
<div style="left:11px;top:359px;width:1428px;height:1px;background:#6b6b6b"></div>
<div style="left:11px;top:359px;width:2px;height:454px;background:linear-gradient(90deg,#8a8a8a,#5f5f5f)"></div>
<div style="left:14px;top:361px;width:1px;height:42px;background:#8c8c8c"></div>
<div style="left:79px;top:361px;width:1px;height:42px;background:#8c8c8c"></div>
<div style="left:167px;top:361px;width:1px;height:42px;background:#8c8c8c"></div>
<div style="left:393px;top:361px;width:1px;height:42px;background:#8c8c8c"></div>
<div style="left:518px;top:361px;width:1px;height:42px;background:#8c8c8c"></div>
<div style="left:598px;top:361px;width:1px;height:42px;background:#8c8c8c"></div>
<div style="left:903px;top:361px;width:1px;height:42px;background:#8c8c8c"></div>
<div style="left:959px;top:361px;width:1px;height:42px;background:#8c8c8c"></div>
<svg class="i" style="left:35px;top:365px;" width="16" height="16" viewBox="0 0 16 16"><path d="M1 1h13.5M1 4.2h13.5" stroke="#111" stroke-width="1.6"/><path d="M11.5 7.2h3.2" stroke="#111" stroke-width="1.6"/><path d="M0.8 11.3c2.6-4.6 10.6-4.6 13.6 0c-3.2 4.4-11 4.4-13.6 0z" fill="#fdf6d8" stroke="#d9a520" stroke-width="1.1"/><path d="M1.5 9.2c3-3.4 9-3.6 12 0" fill="none" stroke="#e6b93a" stroke-width="1"/><circle cx="7.6" cy="11.4" r="2.7" fill="#2f7fb4"/><circle cx="7.6" cy="11.4" r="1.3" fill="#0a1a28"/></svg>
<svg class="i" style="left:53.5px;top:372px" width="8" height="4.500" viewBox="0 0 8 4.500"><path d="M0 0h8L4 4.500z" fill="#444"/></svg>
<div class="t c" style="left:-103.0px;width:300px;top:386px;">Zobrazení</div>
<svg class="i" style="left:87px;top:365px;" width="16" height="16" viewBox="0 0 16 16"><path d="M2.6 1.4h7l3.6 3.4v9.6H2.6z" fill="#fdfeff" stroke="#3c8fd9" stroke-width="1.3"/><path d="M9.6 1.4v3.4h3.6" fill="#dcebf9" stroke="#3c8fd9" stroke-width=".8"/><path d="M2.4 14.9h11" stroke="#2f79c0" stroke-width="1"/><path d="M8.3 8.3l4.2 4.2" stroke="#f08a24" stroke-width="2.2"/><path d="M12 12l1.9 1.9" stroke="#b5321f" stroke-width="1.8"/><path d="M7.4 7.4l1.3 1.3" stroke="#f6d7a8" stroke-width="1.6"/></svg>
<svg class="i" style="left:114px;top:365px;" width="16" height="16" viewBox="0 0 16 16"><path d="M2.6 1.4h10.6v13H2.6z" fill="#fdfeff" stroke="#3c8fd9" stroke-width="1.3"/><path d="M3.4 2.2h7.2l1.8 1.8v4.4L8 11.2H3.4z" fill="#f9c21a"/><path d="M2.4 14.9h11" stroke="#2f79c0" stroke-width="1"/><path d="M12.8 6.6l-5 5" stroke="#f08a24" stroke-width="2.2"/><path d="M7.9 11.5l-1.6 1.7" stroke="#b5321f" stroke-width="1.6"/></svg>
<svg class="i" style="left:142px;top:365px;" width="16" height="16" viewBox="0 0 16 16"><path d="M6.2 2.6V1.2h3.6v1.4" fill="none" stroke="#6b7f96" stroke-width="1.1"/><path d="M2.6 3.2h10.8v1.8H2.6z" fill="#f4bd2a" stroke="#6b7f96" stroke-width="1"/><path d="M3.6 5.2h8.8l-.5 9.6H4.1z" fill="#f0b31e" stroke="#6b7f96" stroke-width="1"/><path d="M6.1 6.6v7M8 6.6v7M9.9 6.6v7" stroke="#b98412" stroke-width="1"/></svg>
<div class="t c" style="left:-26.5px;width:300px;top:386px;">Úpravy</div>
<svg class="i" style="left:176px;top:365px;" width="16" height="16" viewBox="0 0 16 16"><path d="M0 1.8h16M0 4.3h16M0 6.8h16M0 9.3h16M0 11.8h16M0 14.3h16" stroke="#1a1a1a" stroke-width="1.35"/><circle cx="10.3" cy="2.6" r="2.2" fill="#45a6dc"/><path d="M7.4 11.5c.3-2.8 1.5-3.6 2-6.2h1.8c.5 2.6 1.7 3.4 2 6.2z" fill="#45a6dc"/><circle cx="5.6" cy="6.6" r="2.4" fill="#f7993a"/><path d="M1.6 15.6c.3-3 2-4 2.6-6.8h2.8c.6 2.8 2.3 3.8 2.6 6.8z" fill="#f7993a"/></svg>
<svg class="i" style="left:195.0px;top:372px" width="8" height="4.500" viewBox="0 0 8 4.500"><path d="M0 0h8L4 4.500z" fill="#444"/></svg>
<svg class="i" style="left:214px;top:365px;" width="16" height="16" viewBox="0 0 16 16"><path d="M0.9 2.4L6.6 8.6v5l2.8 1.6V8.6l5.7-6.2z" fill="#2f7cc4"/><path d="M6.6 8.6v5l1.2.7V8.6z" fill="#5aa0e0"/><ellipse cx="8" cy="2.4" rx="7.1" ry="1.7" fill="#86bdee" stroke="#d0a744" stroke-width="0.9"/></svg>
<svg class="i" style="left:231.5px;top:372px" width="8" height="4.500" viewBox="0 0 8 4.500"><path d="M0 0h8L4 4.500z" fill="#444"/></svg>
<svg class="i" style="left:250px;top:365px;" width="16" height="16" viewBox="0 0 16 16"><rect x="3.2" y="1.2" width="6.6" height="7.4" fill="#e4eefa" stroke="#5b92d8" stroke-width="1.3"/><rect x="1" y="9.4" width="10.6" height="3.4" fill="#f3f7fc" stroke="#3f73b5" stroke-width="1.3"/><rect x="7.2" y="6.4" width="7.6" height="8.2" fill="#f6dfc0" fill-opacity=".55" stroke="#e5a25c" stroke-width="1.3"/></svg>
<svg class="i" style="left:277px;top:365px;" width="16" height="16" viewBox="0 0 16 16"><path d="M6.5 0.8l8.3 3.4l-2.2 8.2l-5.4 2.8L1 9.6L2.8 3z" fill="#fcfcfc" stroke="#8b8b8b" stroke-width="0.8"/><path d="M1 9.6L2.8 3l3.7-2.2l8.3 3.4" fill="none" stroke="#c4232b" stroke-width="1.5"/><path d="M4 12.2l3.2 3l5.4-2.8" fill="none" stroke="#2b9a3c" stroke-width="1.5"/><path d="M2.8 3l9.8 9.4M14.8 4.2L1 9.6M6.5.8l.7 14.4M4.6 1.9l9.2 6.4M10.6 2.5L2.6 11M12.7 8.3L5 13.4M1.9 6.3l8 7.4" stroke="#6f6f6f" stroke-width="0.55"/></svg>
<svg class="i" style="left:305px;top:365px;" width="16" height="16" viewBox="0 0 16 16"><rect x="1" y="4" width="13.5" height="11" fill="#1f7fc4"/><circle cx="7.6" cy="9.8" r="4.4" fill="#fff" stroke="#0f4f85" stroke-width="1"/><path d="M7.6 6.8v3.2l2 1.4" fill="none" stroke="#222" stroke-width="1"/><path d="M4.5 4.2C6 1.2 10 .8 12.5 3l1.6-1.6v5h-5L10.8 4.7C9.5 3.4 7.5 3.6 6.4 5z" fill="#f7c32e" stroke="#c98f0e" stroke-width=".5"/></svg>
<svg class="i" style="left:322.5px;top:372px" width="8" height="4.500" viewBox="0 0 8 4.500"><path d="M0 0h8L4 4.500z" fill="#444"/></svg>
<svg class="i" style="left:341px;top:365px;" width="16" height="16" viewBox="0 0 16 16"><rect x="0.8" y="0.8" width="14.4" height="14.4" rx="1.6" fill="#fdf8ea" stroke="#d89a1e" stroke-width="1.2"/><path d="M5.2 2.8v10.4M10.8 2.8v10.4" stroke="#c9860e" stroke-width="1.1"/><ellipse cx="5.2" cy="9.6" rx="2.2" ry="1.4" fill="#fdf8ea" stroke="#c9860e" stroke-width="1.1"/><ellipse cx="10.8" cy="5.6" rx="2.2" ry="1.4" fill="#fdf8ea" stroke="#c9860e" stroke-width="1.1"/></svg>
<svg class="i" style="left:369px;top:365px;" width="16" height="16" viewBox="0 0 16 16"><circle cx="8" cy="8" r="7.3" fill="#2f97dc"/><circle cx="8" cy="6" r="6" fill="#56b4ee" fill-opacity=".55"/><path d="M5.6 6.2c0-3.4 5-3.4 5 0c0 1.8-2.4 1.8-2.4 3.8" fill="none" stroke="#fff" stroke-width="1.9"/><circle cx="8.1" cy="12.4" r="1.15" fill="#fff"/></svg>
<div class="t c" style="left:130.5px;width:300px;top:386px;">Nástroje</div>
<svg class="i" style="left:403px;top:365px;" width="16" height="16" viewBox="0 0 16 16"><rect x="1.5" y="1.5" width="12" height="13.5" rx="1" fill="#eef4fb" stroke="#7fa7d6" stroke-width="1.3"/><path d="M3 1.2h9" stroke="#4a86c8" stroke-width="1.6"/><path d="M3.5 5.5h8M3.5 8h8M3.5 10.5h8" stroke="#c3d5ea" stroke-width=".8"/><path d="M6.5 10.5l5-6" stroke="#e89b2e" stroke-width="2"/><path d="M6.5 10.5l-.8 1.6" stroke="#c03a2b" stroke-width="1.4"/></svg>
<svg class="i" style="left:430px;top:365px;" width="16" height="16" viewBox="0 0 16 16"><path d="M1.2 15L6.2 9.4" stroke="#8f8f8f" stroke-width="1.3"/><path d="M4.4 7.2c1.8-.6 4.6 2.2 4 4z" fill="#2a6fb0"/><path d="M6.2 7l2.2-2.8l3.4 3.4L9 9.8z" fill="#3683c8"/><circle cx="11.2" cy="4.2" r="3.5" fill="#3f8fd8"/><circle cx="10.2" cy="3.2" r="1.5" fill="#7db8ee"/></svg>
<svg class="i" style="left:456px;top:365px;" width="16" height="16" viewBox="0 0 16 16"><rect x="1" y="0.7" width="14" height="14.6" rx="1.2" fill="#fdf8ea" stroke="#d89a1e" stroke-width="1.2"/><path d="M7 4.1h6M7 8h6M7 11.9h6" stroke="#c9860e" stroke-width="1.3"/><path d="M2.8 4l1.1 1.1L5.8 3M2.8 7.9L3.9 9l1.9-2.1" fill="none" stroke="#c9860e" stroke-width="1"/><circle cx="4.3" cy="11.9" r="1.2" fill="#c9860e"/></svg>
<svg class="i" style="left:482px;top:365px;" width="16" height="16" viewBox="0 0 16 16"><path d="M7 1h7.5v13H7z" fill="#e9e9e9" stroke="#8a8a8a" stroke-width="1"/><path d="M12 1v13" stroke="#b5b5b5" stroke-width="1.5"/><circle cx="6.2" cy="9.6" r="5.6" fill="#24406e"/><path d="M6.2 9.6L1.6 6.6A5.6 5.6 0 0 1 8 4.3z" fill="#5aa0e0"/><path d="M6.2 9.6l4.6 3A5.6 5.6 0 0 1 4.4 14.9z" fill="#3b6cb0"/><circle cx="6.2" cy="9.6" r="1.8" fill="#f1f1f1"/><circle cx="6.2" cy="9.6" r=".8" fill="#24406e"/></svg>
<svg class="i" style="left:501.5px;top:372px" width="8" height="4.500" viewBox="0 0 8 4.500"><path d="M0 0h8L4 4.500z" fill="#444"/></svg>
<div class="t c" style="left:306.0px;width:300px;top:386px;">Připojit</div>
<svg class="i" style="left:527px;top:365px;" width="16" height="16" viewBox="0 0 16 16"><path d="M3.2 1h7.6l3.400 3.200V15H3.200z" fill="#fdfffd" stroke="#45a052" stroke-width="1.3"/><path d="M10.800 1v3.200h3.400" fill="#d9efdb" stroke="#45a052" stroke-width=".8"/><rect x="1.200" y="3.400" width="3.600" height="1.700" fill="#d92a2a"/><path d="M5.600 7.600l5.200 6.200M10.800 7.600l-5.200 6.200" stroke="#1f7a31" stroke-width="2.100"/></svg>
<svg class="i" style="left:545.0px;top:372px" width="8" height="4.500" viewBox="0 0 8 4.500"><path d="M0 0h8L4 4.500z" fill="#444"/></svg>
<svg class="i" style="left:564px;top:365px;" width="16" height="16" viewBox="0 0 16 16"><path d="M5 0.8h7l2 4.6H3.4z" fill="#fafafa" stroke="#9a9a9a" stroke-width=".8"/><path d="M.8 7c0-1.2.8-2 2-2h10.4c1.2 0 2 .8 2 2v5.400H.8z" fill="#6a6a6a"/><path d="M.8 7.800h14.400" stroke="#9c9c9c" stroke-width="1.2"/><path d="M2 6.200h12" stroke="#4a4a4a" stroke-width="1"/><path d="M4.800 10.200h8.400L11.400 15H2.600z" fill="#35aee6" stroke="#1d84bd" stroke-width=".6"/></svg>
<svg class="i" style="left:582.5px;top:372px" width="8" height="4.500" viewBox="0 0 8 4.500"><path d="M0 0h8L4 4.500z" fill="#444"/></svg>
<div class="t c" style="left:408.5px;width:300px;top:386px;">Výstupy</div>
<svg class="i" style="left:608px;top:365px;" width="16" height="16" viewBox="0 0 16 16"><path d="M0 1.500h5.800M7 1.500h6.400M0 7.500h5.800M0 10.500h4.400" stroke="#858585" stroke-width="1.100"/><path d="M0 4.500h5.800M7 4.500h6.400" stroke="#d3403f" stroke-width="1.100"/><rect x="6.600" y="6.800" width="8.400" height="8.600" fill="#eaf6ea" stroke="#3d9a4b" stroke-width="1.300"/><path d="M8.200 9.200h1.200M10.400 9.200h3.200M8.200 11.200h1.200M10.400 11.200h3.200M8.200 13.200h1.200M10.400 13.200h3.200" stroke="#3d9a4b" stroke-width="1"/></svg>
<div class="t" style="left:628px;top:365px;">Komponenty</div>
<svg class="i" style="left:709px;top:365px;" width="16" height="16" viewBox="0 0 16 16"><path d="M0 1.500h5.800M7 1.500h6.400M0 7.500h5.800M0 10.500h4.400" stroke="#858585" stroke-width="1.100"/><path d="M0 4.500h5.800M7 4.500h6.400" stroke="#d3403f" stroke-width="1.100"/><path d="M6.800 7h8.200v2.200H6.800zM6.200 10.200h3.300v2H6.200zM10.700 10.200h4.300v2h-4.300zM4.600 13.300h10.400v2.100H4.600z" fill="#e7f0fa" stroke="#3a7cc4" stroke-width="1"/><path d="M2.600 11.200h3.600M1.400 14.300h3.200" stroke="#3a7cc4" stroke-width="1"/></svg>
<div class="t" style="left:729px;top:365px;">Operace</div>
<svg class="i" style="left:788px;top:365px;" width="16" height="16" viewBox="0 0 16 16"><rect x="1" y="1" width="10" height="7" fill="#fff" stroke="#555" stroke-width="1.1"/><path d="M1 3.2h10" stroke="#555" stroke-width="1"/><path d="M5.5 8v2.5M2.5 13v-2.5h6V13" fill="none" stroke="#555" stroke-width="1"/><rect x="0.8" y="12" width="3.6" height="3" fill="#e7f0fa" stroke="#3a7cc4" stroke-width="1"/><rect x="6.6" y="12" width="3.6" height="3" fill="#e7f0fa" stroke="#3a7cc4" stroke-width="1"/><rect x="10" y="8.5" width="5" height="5.5" fill="#e7f0fa" stroke="#3a7cc4" stroke-width="1.1"/></svg>
<div class="t" style="left:808px;top:365px;">Zásobník práce</div>
<div class="t c" style="left:601.0px;width:300px;top:386px;">Vlastní</div>
<svg class="i" style="left:912px;top:365px;" width="16" height="16" viewBox="0 0 16 16"><path d="M0 1h4l4.5 7L4 15H0l4.5-7z" fill="#2d7fd0"/><path d="M4.5 1h4L13 8l-4.5 7h-4L9 8z" fill="#3d93e0"/><path d="M9 1h3.2L16.8 8l-4.6 7H9l4.5-7z" fill="#f3b61f"/></svg>
<svg class="i" style="left:932.5px;top:372px" width="8" height="4.500" viewBox="0 0 8 4.500"><path d="M0 0h8L4 4.500z" fill="#444"/></svg>
<svg class="i" style="left:974.5px;top:364.5px;" width="17" height="17" viewBox="0 0 16 16"><path d="M7.200 7.200V4a3.200 3.200 0 1 0-3.200 3.200zM8.800 7.200H12A3.200 3.200 0 1 0 8.800 4zM8.800 8.800V12A3.200 3.200 0 1 0 12 8.800zM7.200 8.800H4A3.200 3.200 0 1 0 7.200 12z" fill="#fbfbfb" stroke="#9c9c9c" stroke-width="1"/></svg>
<svg class="i" style="left:993.5px;top:372px" width="8" height="4.500" viewBox="0 0 8 4.500"><path d="M0 0h8L4 4.500z" fill="#444"/></svg>
<div class="t" style="left:1005px;top:365px;">Vše</div>
<div style="left:13px;top:405px;width:1426px;height:3px;background:linear-gradient(#5f5f5f,#8f8f8f)"></div>
<div style="left:13px;top:408px;width:1426px;height:19px;background:#f0f0f0"></div>
<div style="left:13px;top:427px;width:1426px;height:2px;background:linear-gradient(#777,#9a9a9a)"></div>
<div style="left:13px;top:429px;width:1426px;height:22px;background:#fff"></div>
<div style="left:13px;top:451px;width:1426px;height:2px;background:linear-gradient(#8a8a8a,#a8a8a8)"></div>
<div style="left:13px;top:453px;width:1426px;height:23px;background:#ffffb4"></div>
<div style="left:13px;top:476px;width:1426px;height:4px;background:linear-gradient(#7a7a7a 0 25%,#8e8e8e 25% 50%,#e4e4e4 50% 75%,#8a8a8a 75%)"></div>
<div style="left:13px;top:480px;width:1426px;height:19px;background:#0078d7"></div>
<div style="left:13px;top:499px;width:1426px;height:1px;background:#9c9c9c"></div>
<div style="left:32px;top:408px;width:1px;height:92px;background:#7f7f7f"></div>
<div style="left:33px;top:408px;width:1px;height:19px;background:#fff"></div>
<div style="left:155px;top:408px;width:1px;height:92px;background:#7f7f7f"></div>
<div style="left:156px;top:408px;width:1px;height:19px;background:#fff"></div>
<div style="left:224px;top:408px;width:1px;height:92px;background:#7f7f7f"></div>
<div style="left:225px;top:408px;width:1px;height:19px;background:#fff"></div>
<div style="left:306px;top:408px;width:1px;height:92px;background:#7f7f7f"></div>
<div style="left:307px;top:408px;width:1px;height:19px;background:#fff"></div>
<div style="left:445px;top:408px;width:1px;height:92px;background:#7f7f7f"></div>
<div style="left:446px;top:408px;width:1px;height:19px;background:#fff"></div>
<div style="left:551px;top:408px;width:1px;height:92px;background:#7f7f7f"></div>
<div style="left:552px;top:408px;width:1px;height:19px;background:#fff"></div>
<div style="left:659px;top:408px;width:1px;height:92px;background:#7f7f7f"></div>
<div style="left:660px;top:408px;width:1px;height:19px;background:#fff"></div>
<div style="left:709px;top:408px;width:1px;height:92px;background:#7f7f7f"></div>
<div style="left:710px;top:408px;width:1px;height:19px;background:#fff"></div>
<div style="left:778px;top:408px;width:1px;height:92px;background:#7f7f7f"></div>
<div style="left:779px;top:408px;width:1px;height:19px;background:#fff"></div>
<div style="left:1050px;top:408px;width:1px;height:92px;background:#7f7f7f"></div>
<div style="left:1051px;top:408px;width:1px;height:19px;background:#fff"></div>
<div style="left:1156px;top:408px;width:1px;height:92px;background:#7f7f7f"></div>
<div style="left:1157px;top:408px;width:1px;height:19px;background:#fff"></div>
<div style="left:1321px;top:408px;width:1px;height:92px;background:#7f7f7f"></div>
<div style="left:1322px;top:408px;width:1px;height:19px;background:#fff"></div>
<div style="left:1379px;top:408px;width:1px;height:92px;background:#7f7f7f"></div>
<div style="left:1380px;top:408px;width:1px;height:19px;background:#fff"></div>
<div style="left:1434px;top:408px;width:1px;height:92px;background:#7f7f7f"></div>
<div style="left:1435px;top:408px;width:1px;height:19px;background:#fff"></div>
<div style="left:13px;top:408px;width:1px;height:19px;background:#fff"></div>
<div style="left:13px;top:408px;width:1426px;height:1px;background:#fff"></div>
<div class="t b clip" style="left:36px;top:410px;width:119px">Číslo zakázky</div>
<div class="t clip" style="left:39px;top:432px;width:116px">Stejné</div>
<svg class="i" style="left:138px;top:438px" width="10" height="7" viewBox="0 0 10 7"><path d="M0.500 0.600L5 5.600l4.500-5" fill="none" stroke="#444" stroke-width="1.100"/></svg>
<div class="t" style="left:33px;top:481px;width:118.5px;text-align:right;color:#fff">5097</div>
<div class="t b clip" style="left:159px;top:410px;width:65px">Řádek</div>
<div class="t clip" style="left:162px;top:432px;width:62px">Stejné</div>
<svg class="i" style="left:207px;top:438px" width="10" height="7" viewBox="0 0 10 7"><path d="M0.500 0.600L5 5.600l4.500-5" fill="none" stroke="#444" stroke-width="1.100"/></svg>
<div class="t" style="left:156px;top:481px;width:64.5px;text-align:right;color:#fff">20</div>
<div class="t b clip" style="left:228px;top:410px;width:78px">Výrobek</div>
<div class="t clip" style="left:231px;top:432px;width:75px">Začíná ...</div>
<svg class="i" style="left:289px;top:438px" width="10" height="7" viewBox="0 0 10 7"><path d="M0.500 0.600L5 5.600l4.500-5" fill="none" stroke="#444" stroke-width="1.100"/></svg>
<div class="t clip" style="left:228.5px;top:481px;width:87.5px;color:#fff;transform:scaleX(0.945);transform-origin:0 0">ZVS-FINAL</div>
<div class="t b clip" style="left:310px;top:410px;width:135px">Název</div>
<div class="t clip" style="left:313px;top:432px;width:132px">Začíná na</div>
<svg class="i" style="left:428px;top:438px" width="10" height="7" viewBox="0 0 10 7"><path d="M0.500 0.600L5 5.600l4.500-5" fill="none" stroke="#444" stroke-width="1.100"/></svg>
<div class="t clip" style="left:310.5px;top:481px;width:134.5px;color:#fff">Finál pro test ŽVŠ</div>
<div class="t b clip" style="left:449px;top:410px;width:102px">Označení 1</div>
<div class="t clip" style="left:452px;top:432px;width:99px">Začíná na</div>
<svg class="i" style="left:534px;top:438px" width="10" height="7" viewBox="0 0 10 7"><path d="M0.500 0.600L5 5.600l4.500-5" fill="none" stroke="#444" stroke-width="1.100"/></svg>
<div class="t b clip" style="left:555px;top:410px;width:104px">Termín</div>
<div class="t clip" style="left:558px;top:432px;width:101px">Stejné</div>
<svg class="i" style="left:642px;top:438px" width="10" height="7" viewBox="0 0 10 7"><path d="M0.500 0.600L5 5.600l4.500-5" fill="none" stroke="#444" stroke-width="1.100"/></svg>
<div class="t clip" style="left:555.5px;top:481px;width:103.5px;color:#fff">13.01.2023</div>
<div class="t b clip" style="left:663px;top:410px;width:46px">Rok</div>
<div class="t clip" style="left:666px;top:432px;width:43px">S...</div>
<svg class="i" style="left:692px;top:438px" width="10" height="7" viewBox="0 0 10 7"><path d="M0.500 0.600L5 5.600l4.500-5" fill="none" stroke="#444" stroke-width="1.100"/></svg>
<div class="t" style="left:660px;top:481px;width:45.5px;text-align:right;color:#fff">2023</div>
<div class="t b clip" style="left:713px;top:410px;width:65px">Týden</div>
<div class="t clip" style="left:716px;top:432px;width:62px">Stejné</div>
<svg class="i" style="left:761px;top:438px" width="10" height="7" viewBox="0 0 10 7"><path d="M0.500 0.600L5 5.600l4.500-5" fill="none" stroke="#444" stroke-width="1.100"/></svg>
<div class="t" style="left:710px;top:481px;width:64.5px;text-align:right;color:#fff">2</div>
<div class="t b clip" style="left:782px;top:410px;width:268px">Plánované množství</div>
<div class="t clip" style="left:785px;top:432px;width:265px">Stejné</div>
<svg class="i" style="left:1033px;top:438px" width="10" height="7" viewBox="0 0 10 7"><path d="M0.500 0.600L5 5.600l4.500-5" fill="none" stroke="#444" stroke-width="1.100"/></svg>
<div class="t" style="left:779px;top:481px;width:267.5px;text-align:right;color:#fff">1,000</div>
<div class="t b clip" style="left:1054px;top:410px;width:102px">MJ</div>
<div class="t clip" style="left:1057px;top:432px;width:99px">Bez výběru</div>
<svg class="i" style="left:1139px;top:438px" width="10" height="7" viewBox="0 0 10 7"><path d="M0.500 0.600L5 5.600l4.500-5" fill="none" stroke="#444" stroke-width="1.100"/></svg>
<div class="t b clip" style="left:1160px;top:410px;width:161px">Plán. množ. v 2.MJ</div>
<div class="t clip" style="left:1163px;top:432px;width:158px">Stejné</div>
<svg class="i" style="left:1304px;top:438px" width="10" height="7" viewBox="0 0 10 7"><path d="M0.500 0.600L5 5.600l4.500-5" fill="none" stroke="#444" stroke-width="1.100"/></svg>
<div class="t" style="left:1157px;top:481px;width:160.5px;text-align:right;color:#fff">0,0010</div>
<div class="t b clip" style="left:1325px;top:410px;width:54px">MerJ</div>
<div class="t clip" style="left:1328px;top:432px;width:51px">Be...</div>
<svg class="i" style="left:1362px;top:438px" width="10" height="7" viewBox="0 0 10 7"><path d="M0.500 0.600L5 5.600l4.500-5" fill="none" stroke="#444" stroke-width="1.100"/></svg>
<div class="t clip" style="left:1325.5px;top:481px;width:53.5px;color:#fff">t</div>
<div class="t b clip" style="left:1383px;top:410px;width:51px">Stav</div>
<div class="t clip" style="left:1386px;top:432px;width:48px">B...</div>
<svg class="i" style="left:1417px;top:438px" width="10" height="7" viewBox="0 0 10 7"><path d="M0.500 0.600L5 5.600l4.500-5" fill="none" stroke="#444" stroke-width="1.100"/></svg>
<div class="t clip" style="left:1383.5px;top:481px;width:50.5px;color:#fff">ak...</div>
<div class="t b clip" style="left:1438px;top:410px;width:1px">T</div>
<div style="left:13px;top:453px;width:19px;height:23px;background:#fff"></div>
<div style="left:13px;top:427px;width:19px;height:2px;background:#f6f6f6"></div>
<div style="left:13px;top:480px;width:19px;height:19px;background:#f4f4f4"></div>
<div style="left:17px;top:411px;width:11px;height:11px;border:1px solid #8e8f8f;background:linear-gradient(135deg,#dcdcdc,#f4f4f4 60%,#fff);box-shadow:inset 0 0 0 1px #f4f4f4"></div>
<div style="left:17px;top:483px;width:11px;height:11px;border:1px solid #8e8f8f;background:linear-gradient(135deg,#dcdcdc,#f4f4f4 60%,#fff);box-shadow:inset 0 0 0 1px #f4f4f4"></div>
<svg class="i" style="left:644px;top:453px;" width="15" height="19" viewBox="0 0 14 16" preserveAspectRatio="none"><rect x="0.700" y="0.700" width="12.600" height="14.600" fill="#9a9a9a" stroke="#0a0a0a" stroke-width="1.400"/><rect x="2.600" y="2.800" width="4" height="2" fill="#111"/><rect x="7.400" y="2.800" width="4" height="2" fill="#d8d8d8"/><path d="M2.600 7.200h8.800M2.600 9.800h8.800M2.600 12.400h8.800" stroke="#fff" stroke-width="1.500" stroke-dasharray="2.400 0.800"/></svg>
<div style="left:13px;top:500px;width:1426px;height:19px;background:#f0f0f0"></div>
<div style="left:13px;top:519px;width:1426px;height:1px;background:#6b6b6b"></div>
<div style="left:11px;top:520px;width:1428px;height:4px;background:#f4f4f4"></div>
<div style="left:11px;top:524px;width:1428px;height:1px;background:#6b6b6b"></div>
<div style="left:15px;top:531px;width:1424px;height:53px;border:1px solid #a9bfdc;border-radius:5px;border-right:none;border-top-right-radius:0;border-bottom-right-radius:0"></div>
<div class="t b" style="left:21px;top:525px;background:#f0f0f0;padding:0 3px;font-size:12px;letter-spacing:0;height:12px;line-height:12px">Řádek výrobní zakázky</div>
<div class="t" style="left:26px;top:555px;">Zakázka</div>
<div style="left:76px;top:551px;width:99px;height:22px;border:1px solid #adadad;background:#fff"></div>
<div class="t" style="left:80px;top:555px;color:#3c3c3c">sériová</div>
<svg class="i" style="left:162.5px;top:560px" width="10" height="7" viewBox="0 0 10 7"><path d="M0.500 0.600L5 5.600l4.500-5" fill="none" stroke="#8a8a8a" stroke-width="1.100"/></svg>
<div style="left:188px;top:551px;width:99px;height:22px;border:1px solid #a6a6a6;background:#e6e6e6"></div>
<div class="t" style="left:188px;top:555px;width:97px;text-align:right;">5097</div>
<div style="left:301px;top:551px;width:48px;height:22px;border:1px solid #a6a6a6;background:#e6e6e6"></div>
<div class="t" style="left:301px;top:555px;width:46px;text-align:right;">20</div>
<div style="left:388px;top:551px;width:111px;height:22px;border:1px solid #a6a6a6;background:#e6e6e6"></div>
<div class="t" style="left:391px;top:555px;">13.01.2023</div>
<div class="t" style="left:352px;top:555px;background:#f0f0f0">Termín</div>
<div style="left:486px;top:552px;width:14px;height:22px;background:#8f8f8f"></div>
<svg class="i" style="left:487px;top:554px;" width="12" height="17" viewBox="0 0 14 16" preserveAspectRatio="none"><rect x="0" y="0" width="14" height="16" fill="#8d8d8d"/><rect x="3" y="3" width="8" height="2.4" fill="#c9c9c9"/><path d="M3 8h2M6 8h2M9 8h2M3 10.5h2M6 10.5h2M9 10.5h2M3 13h2M6 13h2M9 13h2" stroke="#c9c9c9" stroke-width="1.4"/></svg>
<div style="left:563px;top:551px;width:98px;height:22px;border:1px solid #a6a6a6;background:#e6e6e6"></div>
<div class="t" style="left:563px;top:555px;width:96px;text-align:right;">1,0</div>
<div class="t" style="left:513px;top:555px;background:#f0f0f0">Množství</div>
<div style="left:676px;top:551px;width:112px;height:22px;border:1px solid #adadad;background:#fff"></div>
<div class="t" style="left:680px;top:555px;color:#3c3c3c">Kg</div>
<svg class="i" style="left:775.5px;top:560px" width="10" height="7" viewBox="0 0 10 7"><path d="M0.500 0.600L5 5.600l4.500-5" fill="none" stroke="#8a8a8a" stroke-width="1.100"/></svg>
<div class="t" style="left:813px;top:555px;">Výrobek</div>
<div style="left:862px;top:551px;width:198px;height:22px;border:1px solid #a6a6a6;background:#e6e6e6"></div>
<div class="t" style="left:865px;top:555px;">ZVS-FINAL</div>
<div style="left:1064px;top:551px;width:286px;height:22px;border:1px solid #a6a6a6;background:#e6e6e6"></div>
<div class="t" style="left:1093px;top:555px;">Finál pro test ŽVŠ</div>
<div style="left:16px;top:592px;width:946px;height:23px;background:#f2f2f2;box-shadow:inset 0 1px 0 #e6e6e6"></div>
<svg class="i" style="left:21px;top:594px;" width="16" height="16" viewBox="0 0 16 16"><path d="M0 1.500h5.800M7 1.500h6.400M0 7.500h5.800M0 10.500h4.400" stroke="#858585" stroke-width="1.100"/><path d="M0 4.500h5.800M7 4.500h6.400" stroke="#d3403f" stroke-width="1.100"/><circle cx="10.300" cy="11.700" r="3.900" fill="#f7fbff" stroke="#3a86d0" stroke-width="1.200"/><path d="M10.300 9.500v2.900M9.100 6.700h2.400" stroke="#3a86d0" stroke-width="1.200"/></svg>
<div class="t" style="left:41px;top:595px;">Základní údaje</div>
<div style="left:128px;top:593px;width:1px;height:21px;background:#dedede"></div>
<svg class="i" style="left:135px;top:594px;" width="16" height="16" viewBox="0 0 16 16"><path d="M0 2.500h15.500M0 11.500h6.500" stroke="#6a6a6a" stroke-width="1.100"/><rect x="5.400" y="0.800" width="2.600" height="3.400" fill="#fff" stroke="#444" stroke-width="1"/><rect x="2" y="9.800" width="2.600" height="3.400" fill="#fff" stroke="#444" stroke-width="1"/><path d="M0 7h7" stroke="#8fb4e0" stroke-width="1.400"/><rect x="9.400" y="4.300" width="3.200" height="2" fill="#eaf2fb" stroke="#3a7cc4" stroke-width="1"/><rect x="7" y="6.300" width="8.300" height="8.900" fill="#eaf2fb" stroke="#3a7cc4" stroke-width="1.300"/><circle cx="11.200" cy="11" r="1.900" fill="#fff" stroke="#3a7cc4" stroke-width="1.100"/></svg>
<div class="t" style="left:155px;top:595px;">Konfigurace</div>
<div style="left:226px;top:591px;width:157px;height:23px;background:#00ffff"></div>
<div style="left:383px;top:592px;width:1px;height:23px;background:#555"></div>
<svg class="i" style="left:232px;top:594px;" width="16" height="16" viewBox="0 0 16 16"><path d="M0 1.500h5.800M7 1.500h6.400M0 7.500h5.800M0 10.500h4.400" stroke="#858585" stroke-width="1.100"/><path d="M0 4.500h5.800M7 4.500h6.400" stroke="#d3403f" stroke-width="1.100"/><rect x="6.600" y="6.800" width="8.400" height="8.600" fill="#eaf6ea" stroke="#3d9a4b" stroke-width="1.300"/><path d="M8.200 9.200h1.200M10.400 9.200h3.200M8.200 11.200h1.200M10.400 11.200h3.200M8.200 13.200h1.200M10.400 13.200h3.200" stroke="#3d9a4b" stroke-width="1"/></svg>
<div class="t b" style="left:252px;top:595px;">Kusovník a operace</div>
<svg class="i" style="left:390px;top:594px;" width="16" height="16" viewBox="0 0 16 16"><path d="M5.500 4.500l7.500-3.300v9l-7.500-3z" fill="#fdfdfd" stroke="#6a6a6a" stroke-width="1.100"/><path d="M2.300 4.500h3.200v2.700H2.300z" fill="#fdfdfd" stroke="#6a6a6a" stroke-width="1.100"/><path d="M13 4h1.800v3H13" fill="none" stroke="#6a6a6a" stroke-width="1"/><path d="M3.500 7.200v3" stroke="#6a6a6a" stroke-width="1.100"/><path d="M2.500 9.800h4.500v2.200H2.500zM8.500 9.800h6v2.200h-6zM4.500 13h10v2.200h-10z" fill="#e7f0fa" stroke="#3a7cc4" stroke-width="1"/></svg>
<div class="t" style="left:410px;top:595px;">Výkony</div>
<div style="left:455px;top:593px;width:1px;height:21px;background:#dedede"></div>
<svg class="i" style="left:461px;top:594px;" width="16" height="16" viewBox="0 0 16 16"><path d="M0 4.500h5.800M7 4.500h6.400M0 7.500h4.600M0 10.500h4.400" stroke="#858585" stroke-width="1.100"/><path d="M0 1.500h5.800M7 1.500h6.400" stroke="#3d9a4b" stroke-width="1.100"/><rect x="6.600" y="6.800" width="8.400" height="8.600" fill="#e7f0fa" stroke="#3a7cc4" stroke-width="1.300"/><path d="M8.200 8.900h2v1.900h-2zM11.400 8.900h2v1.900h-2zM8.200 11.900h2v1.900h-2zM11.400 11.900h2v1.900h-2z" fill="#fff" stroke="#3a7cc4" stroke-width=".9"/></svg>
<div class="t" style="left:481px;top:595px;">Kalkulace</div>
<div style="left:538px;top:593px;width:1px;height:21px;background:#dedede"></div>
<svg class="i" style="left:544px;top:594px;" width="16" height="16" viewBox="0 0 16 16"><path d="M1 15V6.800L8 2.400l7 4.400V15" fill="none" stroke="#e0a022" stroke-width="1.500"/><path d="M3.600 15V8.600h8.800V15" fill="#fdf1d2" stroke="#e0a022" stroke-width="1.200"/><path d="M3.600 10.800h8.800M3.600 13h8.800" stroke="#e0a022" stroke-width="1.100"/></svg>
<div class="t" style="left:565px;top:595px;">Skladová zásoba</div>
<div style="left:664px;top:593px;width:1px;height:21px;background:#dedede"></div>
<svg class="i" style="left:670px;top:594px;" width="16" height="16" viewBox="0 0 16 16"><path d="M1.200 11.500V7.200l1.600-.400L4.200 2.500h4.200l1.800 5v4" fill="none" stroke="#e0a022" stroke-width="1.300"/><path d="M4.800 7.500h3.400" stroke="#e0a022" stroke-width="1.200"/><circle cx="3.300" cy="13" r="1.700" fill="#fff" stroke="#e0a022" stroke-width="1.200"/><circle cx="8.600" cy="13" r="1.700" fill="#fff" stroke="#e0a022" stroke-width="1.200"/><path d="M12 1v13.400h3.800" fill="none" stroke="#e0a022" stroke-width="1.400"/></svg>
<div class="t" style="left:691px;top:595px;">Skladové transakce</div>
<div style="left:806px;top:593px;width:1px;height:21px;background:#dedede"></div>
<svg class="i" style="left:812px;top:594px;" width="16" height="16" viewBox="0 0 16 16"><rect x="1.5" y="2" width="9.5" height="12.5" rx="1" fill="#fff" stroke="#555" stroke-width="1.1"/><path d="M4 .8v2.4M8.5 .8v2.4" stroke="#555" stroke-width="1.2"/><path d="M3.2 6h5M3.2 8.3h3M3.2 10.6h3" stroke="#3a7cc4" stroke-width="1.1"/><circle cx="11.3" cy="8" r="3.6" fill="#fff" stroke="#d0322d" stroke-width="1.5"/><circle cx="11.3" cy="8" r="1.2" fill="#d0322d"/><path d="M6.5 12.5l2 2l3-3" fill="none" stroke="#3a7cc4" stroke-width="1.2"/></svg>
<div class="t" style="left:832px;top:595px;">Nevydané autovýdeje</div>
<div style="left:960px;top:593px;width:1px;height:21px;background:#dedede"></div>
<div style="left:15px;top:616px;width:1424px;height:3px;background:linear-gradient(#b5c8e1,#8fabd0,#a9bfdc)"></div>
<div style="left:15px;top:616px;width:3px;height:197px;background:linear-gradient(90deg,#b5c8e1,#8fabd0,#a9bfdc)"></div>
<div style="left:18px;top:619px;width:234px;height:1px;background:#6b6b6b"></div>
<div style="left:18px;top:619px;width:1px;height:194px;background:#6b6b6b"></div>
<div style="left:21px;top:622px;width:1px;height:42px;background:#8c8c8c"></div>
<div style="left:86px;top:622px;width:1px;height:42px;background:#8c8c8c"></div>
<div style="left:201px;top:622px;width:1px;height:42px;background:#8c8c8c"></div>
<svg class="i" style="left:42px;top:626px" width="14" height="15" viewBox="0 0 14 15"><path d="M0 .8h14M0 3.5h14M0 6.2h14M0 8.9h14M0 11.6h14M0 14.3h14" stroke="#333" stroke-width="1.2"/></svg>
<svg class="i" style="left:60.5px;top:632px" width="8" height="4.500" viewBox="0 0 8 4.500"><path d="M0 0h8L4 4.500z" fill="#444"/></svg>
<div class="t c" style="left:-96.0px;width:300px;top:646px;">Zobrazení</div>
<svg class="i" style="left:94px;top:626px;" width="16" height="16" viewBox="0 0 16 16"><path d="M2.6 1.4h7l3.6 3.4v9.6H2.6z" fill="#fdfeff" stroke="#3c8fd9" stroke-width="1.3"/><path d="M9.6 1.4v3.4h3.6" fill="#dcebf9" stroke="#3c8fd9" stroke-width=".8"/><path d="M2.4 14.9h11" stroke="#2f79c0" stroke-width="1"/><path d="M8.3 8.3l4.2 4.2" stroke="#f08a24" stroke-width="2.2"/><path d="M12 12l1.9 1.9" stroke="#b5321f" stroke-width="1.8"/><path d="M7.4 7.4l1.3 1.3" stroke="#f6d7a8" stroke-width="1.6"/></svg>
<svg class="i" style="left:121px;top:626px;" width="16" height="16" viewBox="0 0 16 16"><path d="M2.6 1.4h10.6v13H2.6z" fill="#fdfeff" stroke="#3c8fd9" stroke-width="1.3"/><path d="M3.4 2.2h7.2l1.8 1.8v4.4L8 11.2H3.4z" fill="#f9c21a"/><path d="M2.4 14.9h11" stroke="#2f79c0" stroke-width="1"/><path d="M12.8 6.6l-5 5" stroke="#f08a24" stroke-width="2.2"/><path d="M7.9 11.5l-1.6 1.7" stroke="#b5321f" stroke-width="1.6"/></svg>
<svg class="i" style="left:150px;top:626px;" width="16" height="16" viewBox="0 0 16 16"><path d="M6.2 2.6V1.2h3.6v1.4" fill="none" stroke="#6b7f96" stroke-width="1.1"/><path d="M2.6 3.2h10.8v1.8H2.6z" fill="#f4bd2a" stroke="#6b7f96" stroke-width="1"/><path d="M3.6 5.2h8.8l-.5 9.6H4.1z" fill="#f0b31e" stroke="#6b7f96" stroke-width="1"/><path d="M6.1 6.6v7M8 6.6v7M9.9 6.6v7" stroke="#b98412" stroke-width="1"/></svg>
<svg class="i" style="left:176px;top:626px;" width="16" height="16" viewBox="0 0 16 16"><path d="M1.4 1.4h7.4v11H1.4z" fill="#fdfeff" stroke="#3c8fd9" stroke-width="1.2"/><path d="M2.2 4.5v3" stroke="#f4bd2a" stroke-width="1.2"/><path d="M5.4 2.8h5.2l2.8 2.6v9H5.4z" fill="#fdfeff" stroke="#3c8fd9" stroke-width="1.2"/><path d="M9.3 9l3.4 3.4" stroke="#f08a24" stroke-width="2"/><path d="M12.3 12l1.6 1.6" stroke="#b5321f" stroke-width="1.6"/></svg>
<div class="t c" style="left:-6.0px;width:300px;top:646px;">Úpravy</div>
<svg class="i" style="left:211px;top:626px;" width="16" height="16" viewBox="0 0 16 16"><path d="M0 1.8h16M0 4.3h16M0 6.8h16M0 9.3h16M0 11.8h16M0 14.3h16" stroke="#1a1a1a" stroke-width="1.35"/><circle cx="10.3" cy="2.6" r="2.2" fill="#45a6dc"/><path d="M7.4 11.5c.3-2.8 1.5-3.6 2-6.2h1.8c.5 2.6 1.7 3.4 2 6.2z" fill="#45a6dc"/><circle cx="5.6" cy="6.6" r="2.4" fill="#f7993a"/><path d="M1.6 15.6c.3-3 2-4 2.6-6.8h2.8c.6 2.8 2.3 3.8 2.6 6.8z" fill="#f7993a"/></svg>
<svg class="i" style="left:229.5px;top:632px" width="8" height="4.500" viewBox="0 0 8 4.500"><path d="M0 0h8L4 4.500z" fill="#444"/></svg>
<div style="left:236px;top:620px;width:1px;height:45px;background:#8a8a8a"></div>
<div style="left:238px;top:620px;width:11px;height:43px;background:#f6f6f6;border:1px solid #d4d4d4;border-radius:4px"></div>
<svg class="i" style="left:242px;top:637px" width="7" height="11" viewBox="0 0 7 11"><path d="M0.5 0.5L6 5.5L0.5 10.5" fill="none" stroke="#555" stroke-width="1"/></svg>
<div class="clip" style="left:19px;top:664px;width:212px;height:149px">
<div style="left:0px;top:0px;width:260px;height:3px;background:linear-gradient(#5f5f5f,#8f8f8f)"></div>
<div style="left:0px;top:3px;width:260px;height:19px;background:#f0f0f0"></div>
<div style="left:0px;top:22px;width:260px;height:2px;background:linear-gradient(#777,#9a9a9a)"></div>
<div style="left:0px;top:24px;width:260px;height:22px;background:#fff"></div>
<div style="left:0px;top:46px;width:260px;height:2px;background:linear-gradient(#8a8a8a,#a8a8a8)"></div>
<div style="left:0px;top:48px;width:260px;height:23px;background:#ffffb4"></div>
<div style="left:0px;top:71px;width:260px;height:4px;background:linear-gradient(#7a7a7a 0 25%,#8e8e8e 25% 50%,#e4e4e4 50% 75%,#8a8a8a 75%)"></div>
<div style="left:0px;top:75px;width:260px;height:19px;background:#bfccdb"></div>
<div style="left:0px;top:94px;width:260px;height:1px;background:#9c9c9c"></div>
<div style="left:19px;top:3px;width:1px;height:92px;background:#7f7f7f"></div>
<div style="left:20px;top:3px;width:1px;height:19px;background:#fff"></div>
<div style="left:110px;top:3px;width:1px;height:92px;background:#7f7f7f"></div>
<div style="left:111px;top:3px;width:1px;height:19px;background:#fff"></div>
<div style="left:201px;top:3px;width:1px;height:92px;background:#7f7f7f"></div>
<div style="left:202px;top:3px;width:1px;height:19px;background:#fff"></div>
<div style="left:0px;top:3px;width:1px;height:19px;background:#fff"></div>
<div style="left:0px;top:3px;width:260px;height:1px;background:#fff"></div>
<div class="t b clip" style="left:23px;top:5px;width:87px">Druh zakáz...</div>
<div class="t clip" style="left:25px;top:27px;width:85px">Bez výb...</div>
<svg class="i" style="left:93px;top:33px" width="10" height="7" viewBox="0 0 10 7"><path d="M0.500 0.600L5 5.600l4.500-5" fill="none" stroke="#444" stroke-width="1.100"/></svg>
<div class="t clip" style="left:23.5px;top:76px;width:86.5px;color:#000">sériová</div>
<div class="t b clip" style="left:114px;top:5px;width:87px">Číslo zakázky</div>
<div class="t clip" style="left:116px;top:27px;width:85px">Stejné</div>
<svg class="i" style="left:184px;top:33px" width="10" height="7" viewBox="0 0 10 7"><path d="M0.500 0.600L5 5.600l4.500-5" fill="none" stroke="#444" stroke-width="1.100"/></svg>
<div class="t" style="left:111px;top:76px;width:86.5px;text-align:right;color:#000">5097</div>
<div class="t b clip" style="left:205px;top:5px;width:55px">Řádek</div>
<div class="t clip" style="left:207px;top:27px;width:53px">Stejné</div>
<svg class="i" style="left:243px;top:33px" width="10" height="7" viewBox="0 0 10 7"><path d="M0.500 0.600L5 5.600l4.500-5" fill="none" stroke="#444" stroke-width="1.100"/></svg>
</div>
<div style="left:19px;top:712px;width:19px;height:23px;background:#fff"></div>
<div style="left:19px;top:739px;width:19px;height:19px;background:#f4f4f4"></div>
<div style="left:22.5px;top:671px;width:11px;height:11px;border:1px solid #8e8f8f;background:linear-gradient(135deg,#dcdcdc,#f4f4f4 60%,#fff);box-shadow:inset 0 0 0 1px #f4f4f4"></div>
<div style="left:22.5px;top:743px;width:11px;height:11px;border:1px solid #8e8f8f;background:linear-gradient(135deg,#dcdcdc,#f4f4f4 60%,#fff);box-shadow:inset 0 0 0 1px #f4f4f4"></div>
<div style="left:231px;top:665px;width:21px;height:148px;background:#f0f0f0"></div>
<div style="left:230px;top:667px;width:1px;height:146px;background:#8a8a8a"></div>
<div style="left:231px;top:664px;width:6px;height:2px;background:linear-gradient(#5f5f5f,#8f8f8f)"></div>
<div style="left:239px;top:687px;width:6px;height:11px;background:#8a8a8a"></div>
<div style="left:252px;top:616px;width:3px;height:197px;background:#b9cbe3"></div>
<div style="left:255px;top:619px;width:5px;height:194px;background:#a9a9a9"></div>
<div style="left:255px;top:617px;width:5px;height:23px;background:#e4e4e4"></div>
<svg class="i" style="left:255px;top:618px" width="5" height="22" viewBox="0 0 5 22"><path d="M5 0v10L0 5z M0 12v10L5 17z" fill="#000"/></svg>
<div style="left:260px;top:616px;width:4px;height:197px;background:linear-gradient(90deg,#b5c8e1,#8fabd0,#a9bfdc)"></div>
<div style="left:264px;top:619px;width:1175px;height:1px;background:#c4c9d0"></div>
<div style="left:264px;top:619px;width:1px;height:194px;background:#6b6b6b"></div>
<div style="left:266px;top:622px;width:1px;height:42px;background:#8c8c8c"></div>
<div style="left:331px;top:622px;width:1px;height:42px;background:#8c8c8c"></div>
<div style="left:446px;top:622px;width:1px;height:42px;background:#8c8c8c"></div>
<div style="left:645px;top:622px;width:1px;height:42px;background:#8c8c8c"></div>
<div style="left:770px;top:622px;width:1px;height:42px;background:#8c8c8c"></div>
<div style="left:851px;top:622px;width:1px;height:42px;background:#8c8c8c"></div>
<div style="left:1163px;top:622px;width:1px;height:42px;background:#8c8c8c"></div>
<div style="left:1217px;top:622px;width:1px;height:42px;background:#8c8c8c"></div>
<svg class="i" style="left:287px;top:626px" width="14" height="15" viewBox="0 0 14 15"><path d="M0 .8h14M0 3.5h14M0 6.2h14M0 8.9h14M0 11.6h14M0 14.3h14" stroke="#333" stroke-width="1.2"/></svg>
<svg class="i" style="left:305.0px;top:632px" width="8" height="4.500" viewBox="0 0 8 4.500"><path d="M0 0h8L4 4.500z" fill="#444"/></svg>
<div class="t c" style="left:149.0px;width:300px;top:646px;">Zobrazení</div>
<svg class="i" style="left:339px;top:626px;" width="16" height="16" viewBox="0 0 16 16"><path d="M2.6 1.4h7l3.6 3.4v9.6H2.6z" fill="#fdfeff" stroke="#3c8fd9" stroke-width="1.3"/><path d="M9.6 1.4v3.4h3.6" fill="#dcebf9" stroke="#3c8fd9" stroke-width=".8"/><path d="M2.4 14.9h11" stroke="#2f79c0" stroke-width="1"/><path d="M8.3 8.3l4.2 4.2" stroke="#f08a24" stroke-width="2.2"/><path d="M12 12l1.9 1.9" stroke="#b5321f" stroke-width="1.8"/><path d="M7.4 7.4l1.3 1.3" stroke="#f6d7a8" stroke-width="1.6"/></svg>
<svg class="i" style="left:366px;top:626px;" width="16" height="16" viewBox="0 0 16 16"><path d="M2.6 1.4h10.6v13H2.6z" fill="#fdfeff" stroke="#3c8fd9" stroke-width="1.3"/><path d="M3.4 2.2h7.2l1.8 1.8v4.4L8 11.2H3.4z" fill="#f9c21a"/><path d="M2.4 14.9h11" stroke="#2f79c0" stroke-width="1"/><path d="M12.8 6.6l-5 5" stroke="#f08a24" stroke-width="2.2"/><path d="M7.9 11.5l-1.6 1.7" stroke="#b5321f" stroke-width="1.6"/></svg>
<svg class="i" style="left:394px;top:626px;" width="16" height="16" viewBox="0 0 16 16"><path d="M6.2 2.6V1.2h3.6v1.4" fill="none" stroke="#6b7f96" stroke-width="1.1"/><path d="M2.6 3.2h10.8v1.8H2.6z" fill="#f4bd2a" stroke="#6b7f96" stroke-width="1"/><path d="M3.6 5.2h8.8l-.5 9.6H4.1z" fill="#f0b31e" stroke="#6b7f96" stroke-width="1"/><path d="M6.1 6.6v7M8 6.6v7M9.9 6.6v7" stroke="#b98412" stroke-width="1"/></svg>
<svg class="i" style="left:421px;top:626px;" width="16" height="16" viewBox="0 0 16 16"><path d="M1.4 1.4h7.4v11H1.4z" fill="#fdfeff" stroke="#3c8fd9" stroke-width="1.2"/><path d="M2.2 4.5v3" stroke="#f4bd2a" stroke-width="1.2"/><path d="M5.4 2.8h5.2l2.8 2.6v9H5.4z" fill="#fdfeff" stroke="#3c8fd9" stroke-width="1.2"/><path d="M9.3 9l3.4 3.4" stroke="#f08a24" stroke-width="2"/><path d="M12.3 12l1.6 1.6" stroke="#b5321f" stroke-width="1.6"/></svg>
<div class="t c" style="left:239.0px;width:300px;top:646px;">Úpravy</div>
<svg class="i" style="left:455px;top:626px;" width="16" height="16" viewBox="0 0 16 16"><path d="M0 1.8h16M0 4.3h16M0 6.8h16M0 9.3h16M0 11.8h16M0 14.3h16" stroke="#1a1a1a" stroke-width="1.35"/><circle cx="10.3" cy="2.6" r="2.2" fill="#45a6dc"/><path d="M7.4 11.5c.3-2.8 1.5-3.6 2-6.2h1.8c.5 2.6 1.7 3.4 2 6.2z" fill="#45a6dc"/><circle cx="5.6" cy="6.6" r="2.4" fill="#f7993a"/><path d="M1.6 15.6c.3-3 2-4 2.6-6.8h2.8c.6 2.8 2.3 3.8 2.6 6.8z" fill="#f7993a"/></svg>
<svg class="i" style="left:474.0px;top:632px" width="8" height="4.500" viewBox="0 0 8 4.500"><path d="M0 0h8L4 4.500z" fill="#444"/></svg>
<svg class="i" style="left:494px;top:626px;" width="16" height="16" viewBox="0 0 16 16"><path d="M0.9 2.4L6.6 8.6v5l2.8 1.6V8.6l5.7-6.2z" fill="#2f7cc4"/><path d="M6.6 8.6v5l1.2.7V8.6z" fill="#5aa0e0"/><ellipse cx="8" cy="2.4" rx="7.1" ry="1.7" fill="#86bdee" stroke="#d0a744" stroke-width="0.9"/></svg>
<svg class="i" style="left:511.0px;top:632px" width="8" height="4.500" viewBox="0 0 8 4.500"><path d="M0 0h8L4 4.500z" fill="#444"/></svg>
<svg class="i" style="left:529px;top:626px;" width="16" height="16" viewBox="0 0 16 16"><rect x="3.2" y="1.2" width="6.6" height="7.4" fill="#e4eefa" stroke="#5b92d8" stroke-width="1.3"/><rect x="1" y="9.4" width="10.6" height="3.4" fill="#f3f7fc" stroke="#3f73b5" stroke-width="1.3"/><rect x="7.2" y="6.4" width="7.6" height="8.2" fill="#f6dfc0" fill-opacity=".55" stroke="#e5a25c" stroke-width="1.3"/></svg>
<svg class="i" style="left:557px;top:626px;" width="16" height="16" viewBox="0 0 16 16"><rect x="1" y="4" width="13.5" height="11" fill="#1f7fc4"/><circle cx="7.6" cy="9.8" r="4.4" fill="#fff" stroke="#0f4f85" stroke-width="1"/><path d="M7.6 6.8v3.2l2 1.4" fill="none" stroke="#222" stroke-width="1"/><path d="M4.5 4.2C6 1.2 10 .8 12.5 3l1.6-1.6v5h-5L10.8 4.7C9.5 3.4 7.5 3.6 6.4 5z" fill="#f7c32e" stroke="#c98f0e" stroke-width=".5"/></svg>
<svg class="i" style="left:575.0px;top:632px" width="8" height="4.500" viewBox="0 0 8 4.500"><path d="M0 0h8L4 4.500z" fill="#444"/></svg>
<svg class="i" style="left:593px;top:626px;" width="16" height="16" viewBox="0 0 16 16"><rect x="0.8" y="0.8" width="14.4" height="14.4" rx="1.6" fill="#fdf8ea" stroke="#d89a1e" stroke-width="1.2"/><path d="M5.2 2.8v10.4M10.8 2.8v10.4" stroke="#c9860e" stroke-width="1.1"/><ellipse cx="5.2" cy="9.6" rx="2.2" ry="1.4" fill="#fdf8ea" stroke="#c9860e" stroke-width="1.1"/><ellipse cx="10.8" cy="5.6" rx="2.2" ry="1.4" fill="#fdf8ea" stroke="#c9860e" stroke-width="1.1"/></svg>
<svg class="i" style="left:620.5px;top:626px;" width="16" height="16" viewBox="0 0 16 16"><circle cx="8" cy="8" r="7.3" fill="#2f97dc"/><circle cx="8" cy="6" r="6" fill="#56b4ee" fill-opacity=".55"/><path d="M5.6 6.2c0-3.4 5-3.4 5 0c0 1.8-2.4 1.8-2.4 3.8" fill="none" stroke="#fff" stroke-width="1.9"/><circle cx="8.1" cy="12.4" r="1.15" fill="#fff"/></svg>
<div class="t c" style="left:396.0px;width:300px;top:646px;">Nástroje</div>
<svg class="i" style="left:655.5px;top:626px;" width="16" height="16" viewBox="0 0 16 16"><rect x="1.5" y="1.5" width="12" height="13.5" rx="1" fill="#eef4fb" stroke="#7fa7d6" stroke-width="1.3"/><path d="M3 1.2h9" stroke="#4a86c8" stroke-width="1.6"/><path d="M3.5 5.5h8M3.5 8h8M3.5 10.5h8" stroke="#c3d5ea" stroke-width=".8"/><path d="M6.5 10.5l5-6" stroke="#e89b2e" stroke-width="2"/><path d="M6.5 10.5l-.8 1.6" stroke="#c03a2b" stroke-width="1.4"/></svg>
<svg class="i" style="left:682px;top:626px;" width="16" height="16" viewBox="0 0 16 16"><path d="M1.2 15L6.2 9.4" stroke="#8f8f8f" stroke-width="1.3"/><path d="M4.4 7.2c1.8-.6 4.6 2.2 4 4z" fill="#2a6fb0"/><path d="M6.2 7l2.2-2.8l3.4 3.4L9 9.8z" fill="#3683c8"/><circle cx="11.2" cy="4.2" r="3.5" fill="#3f8fd8"/><circle cx="10.2" cy="3.2" r="1.5" fill="#7db8ee"/></svg>
<svg class="i" style="left:709px;top:626px;" width="16" height="16" viewBox="0 0 16 16"><rect x="1" y="0.7" width="14" height="14.6" rx="1.2" fill="#fdf8ea" stroke="#d89a1e" stroke-width="1.2"/><path d="M7 4.1h6M7 8h6M7 11.9h6" stroke="#c9860e" stroke-width="1.3"/><path d="M2.8 4l1.1 1.1L5.8 3M2.8 7.9L3.9 9l1.9-2.1" fill="none" stroke="#c9860e" stroke-width="1"/><circle cx="4.3" cy="11.9" r="1.2" fill="#c9860e"/></svg>
<svg class="i" style="left:735px;top:626px;" width="16" height="16" viewBox="0 0 16 16"><path d="M7 1h7.5v13H7z" fill="#e9e9e9" stroke="#8a8a8a" stroke-width="1"/><path d="M12 1v13" stroke="#b5b5b5" stroke-width="1.5"/><circle cx="6.2" cy="9.6" r="5.6" fill="#24406e"/><path d="M6.2 9.6L1.6 6.6A5.6 5.6 0 0 1 8 4.3z" fill="#5aa0e0"/><path d="M6.2 9.6l4.6 3A5.6 5.6 0 0 1 4.4 14.9z" fill="#3b6cb0"/><circle cx="6.2" cy="9.6" r="1.8" fill="#f1f1f1"/><circle cx="6.2" cy="9.6" r=".8" fill="#24406e"/></svg>
<svg class="i" style="left:754.0px;top:632px" width="8" height="4.500" viewBox="0 0 8 4.500"><path d="M0 0h8L4 4.500z" fill="#444"/></svg>
<div class="t c" style="left:558.0px;width:300px;top:646px;">Připojit</div>
<svg class="i" style="left:779px;top:626px;" width="16" height="16" viewBox="0 0 16 16"><path d="M3.2 1h7.6l3.400 3.200V15H3.200z" fill="#fdfffd" stroke="#45a052" stroke-width="1.3"/><path d="M10.800 1v3.200h3.400" fill="#d9efdb" stroke="#45a052" stroke-width=".8"/><rect x="1.200" y="3.400" width="3.600" height="1.700" fill="#d92a2a"/><path d="M5.600 7.600l5.200 6.200M10.800 7.600l-5.200 6.200" stroke="#1f7a31" stroke-width="2.100"/></svg>
<svg class="i" style="left:797.5px;top:632px" width="8" height="4.500" viewBox="0 0 8 4.500"><path d="M0 0h8L4 4.500z" fill="#444"/></svg>
<svg class="i" style="left:816px;top:626px;" width="16" height="16" viewBox="0 0 16 16"><path d="M5 0.8h7l2 4.6H3.4z" fill="#fafafa" stroke="#9a9a9a" stroke-width=".8"/><path d="M.8 7c0-1.2.8-2 2-2h10.4c1.2 0 2 .8 2 2v5.400H.8z" fill="#6a6a6a"/><path d="M.8 7.800h14.400" stroke="#9c9c9c" stroke-width="1.2"/><path d="M2 6.200h12" stroke="#4a4a4a" stroke-width="1"/><path d="M4.800 10.200h8.400L11.400 15H2.600z" fill="#35aee6" stroke="#1d84bd" stroke-width=".6"/></svg>
<svg class="i" style="left:835.0px;top:632px" width="8" height="4.500" viewBox="0 0 8 4.500"><path d="M0 0h8L4 4.500z" fill="#444"/></svg>
<div class="t c" style="left:661.0px;width:300px;top:646px;">Výstupy</div>
<svg class="i" style="left:860.5px;top:625px;" width="15" height="16" viewBox="0 0 16 16"><rect x="0.700" y="0.700" width="14.600" height="13.200" rx="1" fill="#f2f2f2" stroke="#7d7d7d" stroke-width="1.200"/><rect x="3" y="3" width="10" height="8.600" fill="#3f9c4d"/><path d="M5 5h5.500M5 7.300h4M5 9.600h5.500M10.500 5v4.600" fill="none" stroke="#d8f0da" stroke-width="1.100"/><path d="M0.500 15.300h15" stroke="#7d7d7d" stroke-width="1.400"/></svg>
<div class="t" style="left:880px;top:625px;">Stroj</div>
<svg class="i" style="left:918px;top:626px;" width="16" height="16" viewBox="0 0 16 16"><path d="M0 1.500h5.800M7 1.500h6.400M0 7.500h5.800M0 10.500h4.400" stroke="#858585" stroke-width="1.100"/><path d="M0 4.500h5.800M7 4.500h6.400" stroke="#d3403f" stroke-width="1.100"/><path d="M6.800 7h8.200v2.200H6.800zM6.200 10.200h3.300v2H6.200zM10.700 10.200h4.300v2h-4.300zM4.600 13.300h10.400v2.100H4.600z" fill="#e7f0fa" stroke="#3a7cc4" stroke-width="1"/><path d="M2.600 11.200h3.600M1.400 14.300h3.200" stroke="#3a7cc4" stroke-width="1"/></svg>
<div class="t" style="left:939.5px;top:625px;">Hlášení výkonů</div>
<svg class="i" style="left:1035.5px;top:626px;" width="16" height="16" viewBox="0 0 16 16"><path d="M0 1.500h5.800M7 1.500h6.400M0 7.500h5.800M0 10.500h4.400" stroke="#858585" stroke-width="1.100"/><path d="M0 4.500h5.800M7 4.500h6.400" stroke="#d3403f" stroke-width="1.100"/><path d="M6.800 7h8.200v2.200H6.800zM6.200 10.200h3.300v2H6.200zM10.700 10.200h4.300v2h-4.300zM4.600 13.300h10.400v2.100H4.600z" fill="#e7f0fa" stroke="#3a7cc4" stroke-width="1"/><path d="M2.600 11.200h3.600M1.400 14.300h3.200" stroke="#3a7cc4" stroke-width="1"/></svg>
<div class="t" style="left:1056px;top:625px;">Neshodné výrobky</div>
<div class="t c" style="left:858.0px;width:300px;top:646px;">Vlastní</div>
<div class="t c" style="left:1041.0px;width:300px;top:646px;">Nabídka</div>
<div class="t" style="left:1222px;top:646px;">Filtr dle stavu</div>
<div style="left:265px;top:664px;width:1194px;height:3px;background:linear-gradient(#5f5f5f,#8f8f8f)"></div>
<div style="left:265px;top:667px;width:1194px;height:19px;background:#f0f0f0"></div>
<div style="left:265px;top:686px;width:1194px;height:2px;background:linear-gradient(#777,#9a9a9a)"></div>
<div style="left:265px;top:688px;width:1194px;height:22px;background:#fff"></div>
<div style="left:265px;top:710px;width:1194px;height:2px;background:linear-gradient(#8a8a8a,#a8a8a8)"></div>
<div style="left:265px;top:712px;width:1194px;height:23px;background:#ffffb4"></div>
<div style="left:265px;top:735px;width:1194px;height:4px;background:linear-gradient(#7a7a7a 0 25%,#8e8e8e 25% 50%,#e4e4e4 50% 75%,#8a8a8a 75%)"></div>
<div style="left:265px;top:739px;width:1194px;height:19px;background:#bfccdb"></div>
<div style="left:265px;top:758px;width:1194px;height:1px;background:#9c9c9c"></div>
<div style="left:265px;top:759px;width:1194px;height:19px;background:#fff"></div>
<div style="left:265px;top:778px;width:1194px;height:1px;background:#9c9c9c"></div>
<div style="left:265px;top:779px;width:1194px;height:19px;background:#cce4fc"></div>
<div style="left:265px;top:798px;width:1194px;height:1px;background:#9c9c9c"></div>
<div style="left:265px;top:799px;width:1194px;height:19px;background:#fff"></div>
<div style="left:265px;top:818px;width:1194px;height:1px;background:#9c9c9c"></div>
<div style="left:284px;top:667px;width:1px;height:152px;background:#7f7f7f"></div>
<div style="left:285px;top:667px;width:1px;height:19px;background:#fff"></div>
<div style="left:374px;top:667px;width:1px;height:152px;background:#7f7f7f"></div>
<div style="left:375px;top:667px;width:1px;height:19px;background:#fff"></div>
<div style="left:465px;top:667px;width:1px;height:152px;background:#7f7f7f"></div>
<div style="left:466px;top:667px;width:1px;height:19px;background:#fff"></div>
<div style="left:563px;top:667px;width:1px;height:152px;background:#7f7f7f"></div>
<div style="left:564px;top:667px;width:1px;height:19px;background:#fff"></div>
<div style="left:677px;top:667px;width:1px;height:152px;background:#7f7f7f"></div>
<div style="left:678px;top:667px;width:1px;height:19px;background:#fff"></div>
<div style="left:786px;top:667px;width:1px;height:152px;background:#7f7f7f"></div>
<div style="left:787px;top:667px;width:1px;height:19px;background:#fff"></div>
<div style="left:851px;top:667px;width:1px;height:152px;background:#7f7f7f"></div>
<div style="left:852px;top:667px;width:1px;height:19px;background:#fff"></div>
<div style="left:893px;top:667px;width:1px;height:152px;background:#7f7f7f"></div>
<div style="left:894px;top:667px;width:1px;height:19px;background:#fff"></div>
<div style="left:971px;top:667px;width:1px;height:152px;background:#7f7f7f"></div>
<div style="left:972px;top:667px;width:1px;height:19px;background:#fff"></div>
<div style="left:1028px;top:667px;width:1px;height:152px;background:#7f7f7f"></div>
<div style="left:1029px;top:667px;width:1px;height:19px;background:#fff"></div>
<div style="left:1096px;top:667px;width:1px;height:152px;background:#7f7f7f"></div>
<div style="left:1097px;top:667px;width:1px;height:19px;background:#fff"></div>
<div style="left:1191px;top:667px;width:1px;height:152px;background:#7f7f7f"></div>
<div style="left:1192px;top:667px;width:1px;height:19px;background:#fff"></div>
<div style="left:1325px;top:667px;width:1px;height:152px;background:#7f7f7f"></div>
<div style="left:1326px;top:667px;width:1px;height:19px;background:#fff"></div>
<div style="left:265px;top:667px;width:1px;height:19px;background:#fff"></div>
<div style="left:265px;top:667px;width:1194px;height:1px;background:#fff"></div>
<div class="t b clip" style="left:288px;top:669px;width:86px">Druh zakáz...</div>
<div class="t clip" style="left:290px;top:691px;width:84px">Bez výb...</div>
<svg class="i" style="left:357px;top:697px" width="10" height="7" viewBox="0 0 10 7"><path d="M0.500 0.600L5 5.600l4.500-5" fill="none" stroke="#444" stroke-width="1.100"/></svg>
<div class="t clip" style="left:288.5px;top:740px;width:85.5px;color:#000">sériová</div>
<div class="t clip" style="left:288.5px;top:760px;width:85.5px;color:#000">sériová</div>
<div class="t clip" style="left:288.5px;top:780px;width:85.5px;color:#000">sériová</div>
<div class="t clip" style="left:288.5px;top:800px;width:85.5px;color:#000">sériová</div>
<div class="t b clip" style="left:378px;top:669px;width:87px">Číslo zakázky</div>
<div class="t clip" style="left:380px;top:691px;width:85px">Stejné</div>
<svg class="i" style="left:448px;top:697px" width="10" height="7" viewBox="0 0 10 7"><path d="M0.500 0.600L5 5.600l4.500-5" fill="none" stroke="#444" stroke-width="1.100"/></svg>
<div class="t" style="left:375px;top:740px;width:86.5px;text-align:right;color:#000">5097</div>
<div class="t" style="left:375px;top:760px;width:86.5px;text-align:right;color:#000">5097</div>
<div class="t" style="left:375px;top:780px;width:86.5px;text-align:right;color:#000">5097</div>
<div class="t" style="left:375px;top:800px;width:86.5px;text-align:right;color:#000">5097</div>
<div class="t b clip" style="left:469px;top:669px;width:94px">Řádek zakáz...</div>
<div class="t clip" style="left:471px;top:691px;width:92px">Stejné</div>
<svg class="i" style="left:546px;top:697px" width="10" height="7" viewBox="0 0 10 7"><path d="M0.500 0.600L5 5.600l4.500-5" fill="none" stroke="#444" stroke-width="1.100"/></svg>
<div class="t" style="left:466px;top:740px;width:93.5px;text-align:right;color:#000">20</div>
<div class="t" style="left:466px;top:760px;width:93.5px;text-align:right;color:#000">20</div>
<div class="t" style="left:466px;top:780px;width:93.5px;text-align:right;color:#000">20</div>
<div class="t" style="left:466px;top:800px;width:93.5px;text-align:right;color:#000">20</div>
<div class="t b clip" style="left:567px;top:669px;width:110px">Identifikační čí...</div>
<div class="t clip" style="left:569px;top:691px;width:108px">Začíná na</div>
<svg class="i" style="left:660px;top:697px" width="10" height="7" viewBox="0 0 10 7"><path d="M0.500 0.600L5 5.600l4.500-5" fill="none" stroke="#444" stroke-width="1.100"/></svg>
<div class="t clip" style="left:567.5px;top:740px;width:119.5px;color:#000;transform:scaleX(0.945);transform-origin:0 0">ZVS-FINAL</div>
<div class="t clip" style="left:567.5px;top:760px;width:119.5px;color:#000;transform:scaleX(0.945);transform-origin:0 0">ZVS-FINAL</div>
<div class="t clip" style="left:567.5px;top:780px;width:119.5px;color:#000;transform:scaleX(0.945);transform-origin:0 0">ZVS-FINAL</div>
<div class="t clip" style="left:567.5px;top:800px;width:119.5px;color:#000;transform:scaleX(0.945);transform-origin:0 0">ZVS-FINAL</div>
<div class="t b clip" style="left:681px;top:669px;width:105px">Název</div>
<div class="t clip" style="left:683px;top:691px;width:103px">Začíná na</div>
<svg class="i" style="left:769px;top:697px" width="10" height="7" viewBox="0 0 10 7"><path d="M0.500 0.600L5 5.600l4.500-5" fill="none" stroke="#444" stroke-width="1.100"/></svg>
<div class="t clip" style="left:681.5px;top:740px;width:104.5px;color:#000">Finál pro test ŽVŠ</div>
<div class="t clip" style="left:681.5px;top:760px;width:104.5px;color:#000">Finál pro test ŽVŠ</div>
<div class="t clip" style="left:681.5px;top:780px;width:104.5px;color:#000">Finál pro test ŽVŠ</div>
<div class="t clip" style="left:681.5px;top:800px;width:104.5px;color:#000">Finál pro test ŽVŠ</div>
<div class="t b clip" style="left:790px;top:669px;width:61px">Operace</div>
<div class="t clip" style="left:792px;top:691px;width:59px">Ste...</div>
<svg class="i" style="left:834px;top:697px" width="10" height="7" viewBox="0 0 10 7"><path d="M0.500 0.600L5 5.600l4.500-5" fill="none" stroke="#444" stroke-width="1.100"/></svg>
<div class="t" style="left:787px;top:740px;width:60.5px;text-align:right;color:#000">10</div>
<div class="t" style="left:787px;top:760px;width:60.5px;text-align:right;color:#000">20</div>
<div class="t" style="left:787px;top:780px;width:60.5px;text-align:right;color:#000">30</div>
<div class="t" style="left:787px;top:800px;width:60.5px;text-align:right;color:#000">40</div>
<div class="t b clip" style="left:855px;top:669px;width:38px">Druh</div>
<div class="t clip" style="left:857px;top:691px;width:36px">...</div>
<svg class="i" style="left:876px;top:697px" width="10" height="7" viewBox="0 0 10 7"><path d="M0.500 0.600L5 5.600l4.500-5" fill="none" stroke="#444" stroke-width="1.100"/></svg>
<div class="t clip" style="left:855.5px;top:740px;width:37.5px;color:#000">M</div>
<div class="t clip" style="left:855.5px;top:760px;width:37.5px;color:#000">M</div>
<div class="t clip" style="left:855.5px;top:780px;width:37.5px;color:#000">M</div>
<div class="t clip" style="left:855.5px;top:800px;width:37.5px;color:#000">M</div>
<div class="t b clip" style="left:897px;top:669px;width:74px">Název</div>
<div class="t clip" style="left:899px;top:691px;width:72px">Začín...</div>
<svg class="i" style="left:954px;top:697px" width="10" height="7" viewBox="0 0 10 7"><path d="M0.500 0.600L5 5.600l4.500-5" fill="none" stroke="#444" stroke-width="1.100"/></svg>
<div class="t clip" style="left:897.5px;top:740px;width:83.5px;color:#000;transform:scaleX(0.895);transform-origin:0 0">VÝROBA</div>
<div class="t clip" style="left:897.5px;top:760px;width:83.5px;color:#000;transform:scaleX(0.895);transform-origin:0 0">BRUSKA</div>
<div class="t clip" style="left:897.5px;top:780px;width:83.5px;color:#000;transform:scaleX(0.895);transform-origin:0 0">KONTROLA1</div>
<div class="t clip" style="left:897.5px;top:800px;width:83.5px;color:#000;transform:scaleX(0.895);transform-origin:0 0">VÝROBA1</div>
<div class="t b clip" style="left:975px;top:669px;width:53px">Pl.stroj</div>
<div class="t clip" style="left:977px;top:691px;width:51px">St...</div>
<svg class="i" style="left:1011px;top:697px" width="10" height="7" viewBox="0 0 10 7"><path d="M0.500 0.600L5 5.600l4.500-5" fill="none" stroke="#444" stroke-width="1.100"/></svg>
<div class="t" style="left:972px;top:740px;width:52.5px;text-align:right;color:#000">100</div>
<div class="t" style="left:972px;top:760px;width:52.5px;text-align:right;color:#000">570</div>
<div class="t" style="left:972px;top:780px;width:52.5px;text-align:right;color:#000">300</div>
<div class="t" style="left:972px;top:800px;width:52.5px;text-align:right;color:#000">120</div>
<div class="t b clip" style="left:1032px;top:669px;width:64px">Středisko</div>
<div class="t clip" style="left:1034px;top:691px;width:62px">Začí...</div>
<svg class="i" style="left:1079px;top:697px" width="10" height="7" viewBox="0 0 10 7"><path d="M0.500 0.600L5 5.600l4.500-5" fill="none" stroke="#444" stroke-width="1.100"/></svg>
<div class="t clip" style="left:1032.5px;top:740px;width:63.5px;color:#000">00100</div>
<div class="t clip" style="left:1032.5px;top:760px;width:63.5px;color:#000">S001</div>
<div class="t clip" style="left:1032.5px;top:780px;width:63.5px;color:#000">00300</div>
<div class="t clip" style="left:1032.5px;top:800px;width:63.5px;color:#000">00301</div>
<div class="t b clip" style="left:1100px;top:669px;width:91px">Plán.množs...</div>
<div class="t clip" style="left:1102px;top:691px;width:89px">Stejné</div>
<svg class="i" style="left:1174px;top:697px" width="10" height="7" viewBox="0 0 10 7"><path d="M0.500 0.600L5 5.600l4.500-5" fill="none" stroke="#444" stroke-width="1.100"/></svg>
<div class="t" style="left:1097px;top:740px;width:90.5px;text-align:right;color:#000">1,00</div>
<div class="t" style="left:1097px;top:760px;width:90.5px;text-align:right;color:#000">1,00</div>
<div class="t" style="left:1097px;top:780px;width:90.5px;text-align:right;color:#000">1,00</div>
<div class="t" style="left:1097px;top:800px;width:90.5px;text-align:right;color:#000">1,00</div>
<div class="t b clip" style="left:1195px;top:669px;width:130px">Množství v koope...</div>
<div class="t clip" style="left:1197px;top:691px;width:128px">Stejné</div>
<svg class="i" style="left:1308px;top:697px" width="10" height="7" viewBox="0 0 10 7"><path d="M0.500 0.600L5 5.600l4.500-5" fill="none" stroke="#444" stroke-width="1.100"/></svg>
<div class="t" style="left:1192px;top:740px;width:129.5px;text-align:right;color:#000">0,00</div>
<div class="t" style="left:1192px;top:760px;width:129.5px;text-align:right;color:#000">0,00</div>
<div class="t" style="left:1192px;top:780px;width:129.5px;text-align:right;color:#000">0,00</div>
<div class="t" style="left:1192px;top:800px;width:129.5px;text-align:right;color:#000">0,00</div>
<div class="t b clip" style="left:1329px;top:669px;width:130px">Vyrobené množ...</div>
<div class="t clip" style="left:1331px;top:691px;width:128px">Stejné</div>
<div class="t" style="left:1326px;top:740px;width:129.5px;text-align:right;color:#000">0,000</div>
<div class="t" style="left:1326px;top:760px;width:129.5px;text-align:right;color:#000">0,000</div>
<div class="t" style="left:1326px;top:780px;width:129.5px;text-align:right;color:#000">0,000</div>
<div class="t" style="left:1326px;top:800px;width:129.5px;text-align:right;color:#000">0,000</div>
<div style="left:265px;top:712px;width:19px;height:23px;background:#fff"></div>
<div style="left:268px;top:671px;width:11px;height:11px;border:1px solid #8e8f8f;background:linear-gradient(135deg,#dcdcdc,#f4f4f4 60%,#fff);box-shadow:inset 0 0 0 1px #f4f4f4"></div>
<div style="left:265px;top:739px;width:19px;height:19px;background:#f4f4f4"></div>
<div style="left:268px;top:743px;width:11px;height:11px;border:1px solid #8e8f8f;background:linear-gradient(135deg,#dcdcdc,#f4f4f4 60%,#fff);box-shadow:inset 0 0 0 1px #f4f4f4"></div>
<div style="left:265px;top:759px;width:19px;height:19px;background:#f4f4f4"></div>
<div style="left:268px;top:763px;width:11px;height:11px;border:1px solid #8e8f8f;background:linear-gradient(135deg,#dcdcdc,#f4f4f4 60%,#fff);box-shadow:inset 0 0 0 1px #f4f4f4"></div>
<div style="left:265px;top:779px;width:19px;height:19px;background:#f4f4f4"></div>
<div style="left:268px;top:783px;width:11px;height:11px;border:1px solid #8e8f8f;background:linear-gradient(135deg,#dcdcdc,#f4f4f4 60%,#fff);box-shadow:inset 0 0 0 1px #f4f4f4"></div>
<div style="left:265px;top:799px;width:19px;height:19px;background:#f4f4f4"></div>
<div style="left:268px;top:803px;width:11px;height:11px;border:1px solid #8e8f8f;background:linear-gradient(135deg,#dcdcdc,#f4f4f4 60%,#fff);box-shadow:inset 0 0 0 1px #f4f4f4"></div>
<div style="left:907px;top:384px;width:279px;height:245px;background:#f8f8f8;border:1px solid #d2d2d2;box-shadow:1px 1px 2px rgba(0,0,0,.15)"></div>
<svg class="i" style="left:913px;top:389.5px;" width="17" height="17" viewBox="0 0 16 16"><path d="M0 1.500h5.800M7 1.500h6.400M0 7.500h5.800M0 10.500h4.400" stroke="#858585" stroke-width="1.100"/><path d="M0 4.500h5.800M7 4.500h6.400" stroke="#d3403f" stroke-width="1.100"/><rect x="6.600" y="6.800" width="8.400" height="8.600" fill="#eaf6ea" stroke="#3d9a4b" stroke-width="1.300"/><path d="M8.200 9.200h1.200M10.400 9.200h3.200M8.200 11.200h1.200M10.400 11.200h3.200M8.200 13.200h1.200M10.400 13.200h3.200" stroke="#3d9a4b" stroke-width="1"/></svg>
<div class="t m" style="left:943px;top:388px;color:#111">Komponenty řádku</div>
<svg class="i" style="left:913px;top:411.5px;" width="17" height="17" viewBox="0 0 16 16"><path d="M0 1.500h5.800M7 1.500h6.400M0 7.500h5.800M0 10.500h4.400" stroke="#858585" stroke-width="1.100"/><path d="M0 4.500h5.800M7 4.500h6.400" stroke="#d3403f" stroke-width="1.100"/><path d="M6.800 7h8.200v2.200H6.800zM6.200 10.200h3.300v2H6.200zM10.700 10.200h4.300v2h-4.300zM4.600 13.300h10.400v2.100H4.600z" fill="#e7f0fa" stroke="#3a7cc4" stroke-width="1"/><path d="M2.600 11.200h3.600M1.400 14.300h3.200" stroke="#3a7cc4" stroke-width="1"/></svg>
<div class="t m" style="left:943px;top:410px;color:#111">Operace řádku</div>
<svg class="i" style="left:913px;top:433.5px;" width="17" height="17" viewBox="0 0 16 16"><path d="M0 1.500h5.800M7 1.500h6.400M0 7.500h5.800M0 10.500h4.400" stroke="#858585" stroke-width="1.100"/><path d="M0 4.500h5.800M7 4.500h6.400" stroke="#d3403f" stroke-width="1.100"/><rect x="6.600" y="6.800" width="8.400" height="8.600" fill="#eaf6ea" stroke="#3d9a4b" stroke-width="1.300"/><path d="M8.200 9.200h1.200M10.400 9.200h3.200M8.200 11.200h1.200M10.400 11.200h3.200M8.200 13.200h1.200M10.400 13.200h3.200" stroke="#3d9a4b" stroke-width="1"/></svg>
<div class="t m" style="left:943px;top:432px;color:#111">Generování komponent</div>
<svg class="i" style="left:913px;top:455.5px;" width="17" height="17" viewBox="0 0 16 16"><path d="M0 1.500h5.800M7 1.500h6.400M0 7.500h5.800M0 10.500h4.400" stroke="#858585" stroke-width="1.100"/><path d="M0 4.500h5.800M7 4.500h6.400" stroke="#d3403f" stroke-width="1.100"/><rect x="6.600" y="6.800" width="8.400" height="8.600" fill="#eaf6ea" stroke="#3d9a4b" stroke-width="1.300"/><path d="M8.200 9.200h1.200M10.400 9.200h3.200M8.200 11.200h1.200M10.400 11.200h3.200M8.200 13.200h1.200M10.400 13.200h3.200" stroke="#3d9a4b" stroke-width="1"/></svg>
<div class="t m" style="left:943px;top:454px;color:#111">Kopírování komponent</div>
<svg class="i" style="left:913px;top:477.5px;" width="17" height="17" viewBox="0 0 16 16"><path d="M0 1.500h5.800M7 1.500h6.400M0 7.500h5.800M0 10.500h4.400" stroke="#858585" stroke-width="1.100"/><path d="M0 4.500h5.800M7 4.500h6.400" stroke="#d3403f" stroke-width="1.100"/><path d="M6.800 7h8.200v2.200H6.800zM6.200 10.200h3.300v2H6.200zM10.700 10.200h4.300v2h-4.300zM4.600 13.300h10.400v2.100H4.600z" fill="#e7f0fa" stroke="#3a7cc4" stroke-width="1"/><path d="M2.600 11.200h3.600M1.400 14.300h3.200" stroke="#3a7cc4" stroke-width="1"/></svg>
<div class="t m" style="left:943px;top:476px;color:#111">Generování operací</div>
<svg class="i" style="left:913px;top:499.5px;" width="17" height="17" viewBox="0 0 16 16"><path d="M0 1.500h5.800M7 1.500h6.400M0 7.500h5.800M0 10.500h4.400" stroke="#858585" stroke-width="1.100"/><path d="M0 4.500h5.800M7 4.500h6.400" stroke="#d3403f" stroke-width="1.100"/><path d="M6.800 7h8.200v2.200H6.800zM6.200 10.200h3.300v2H6.200zM10.700 10.200h4.300v2h-4.300zM4.600 13.300h10.400v2.100H4.600z" fill="#e7f0fa" stroke="#3a7cc4" stroke-width="1"/><path d="M2.600 11.200h3.600M1.400 14.300h3.200" stroke="#3a7cc4" stroke-width="1"/></svg>
<div class="t m" style="left:943px;top:498px;color:#111">Kopírování operací</div>
<svg class="i" style="left:913px;top:521.5px;" width="17" height="17" viewBox="0 0 16 16"><path d="M0 1.500h5.800M7 1.500h6.400M0 4.500h5.800M7 4.500h6.400M0 7.500h5.800M0 10.500h4.400" stroke="#b0b0b0" stroke-width="1.100"/><path d="M6.800 7h8.200v2.200H6.800zM6.200 10.200h3.300v2H6.200zM10.700 10.200h4.300v2h-4.300zM4.600 13.300h10.400v2.100H4.600z" fill="#f2f2f2" stroke="#a8a8a8" stroke-width="1"/><path d="M2.600 11.200h3.600M1.400 14.300h3.200" stroke="#a8a8a8" stroke-width="1"/></svg>
<div class="t m" style="left:943px;top:520px;color:#a0a0a0">Generování komponent a operací</div>
<svg class="i" style="left:913px;top:543.5px;" width="17" height="17" viewBox="0 0 16 16"><path d="M8 -0.300l1.500 1.700 2.200-1 .600 2.300 2.400.300-.600 2.300L16.300 8l-2.200 1.400.600 2.300-2.400.300-.600 2.300-2.200-1L8 16.300l-1.500-1.700-2.200 1-.600-2.300-2.400-.300.600-2.300L-.300 8l2.200-1.400-.600-2.300 2.400-.300.600-2.300 2.200 1z" fill="#e79c14"/><circle cx="8" cy="8" r="5" fill="#1f5fa8"/><circle cx="8" cy="8" r="3.400" fill="#5a9be0"/><circle cx="8" cy="8" r="2.300" fill="#f6f6f6"/></svg>
<div class="t m" style="left:943px;top:542px;color:#111;letter-spacing:-0.54px">Synchronizace se zásobníkem práce</div>
<svg class="i" style="left:913px;top:565.5px;" width="17" height="17" viewBox="0 0 16 16"><path d="M8 -0.300l1.500 1.700 2.200-1 .600 2.300 2.400.300-.600 2.300L16.300 8l-2.200 1.400.600 2.300-2.400.300-.600 2.300-2.200-1L8 16.300l-1.500-1.700-2.200 1-.600-2.300-2.400-.300.600-2.300L-.300 8l2.200-1.400-.600-2.300 2.400-.300.600-2.300 2.200 1z" fill="#b4b4b4"/><circle cx="8" cy="8" r="5" fill="#9a9a9a"/><circle cx="8" cy="8" r="3.400" fill="#b8b8b8"/><circle cx="8" cy="8" r="2.300" fill="#f4f4f4"/></svg>
<div class="t m" style="left:943px;top:564px;color:#a0a0a0">Změna termínu pokrytí</div>
<div style="left:914px;top:589px;width:267px;height:14px;background:#0078d7;border-radius:3px 7px 7px 3px"></div>
<svg class="i" style="left:913px;top:587.5px;opacity:.4" width="17" height="17" viewBox="0 0 16 16"><path d="M0 1.500h5.800M7 1.500h6.400M0 7.500h5.800M0 10.500h4.400" stroke="#858585" stroke-width="1.100"/><path d="M0 4.500h5.800M7 4.500h6.400" stroke="#d3403f" stroke-width="1.100"/><path d="M6.800 7h8.200v2.200H6.800zM6.200 10.200h3.300v2H6.200zM10.700 10.200h4.300v2h-4.300zM4.600 13.300h10.400v2.100H4.600z" fill="#e7f0fa" stroke="#3a7cc4" stroke-width="1"/><path d="M2.600 11.200h3.600M1.400 14.300h3.200" stroke="#3a7cc4" stroke-width="1"/></svg>
<div class="t m" style="left:943px;top:586px;color:#fff">Generování kontrolního listu</div>
<svg class="i" style="left:913px;top:609.5px;" width="17" height="17" viewBox="0 0 16 16"><rect x="1.5" y="1.5" width="12" height="13.5" rx="1" fill="#eef4fb" stroke="#7fa7d6" stroke-width="1.3"/><path d="M3 1.2h9" stroke="#4a86c8" stroke-width="1.6"/><path d="M3.5 5.5h8M3.5 8h8M3.5 10.5h8" stroke="#c3d5ea" stroke-width=".8"/><path d="M6.5 10.5l5-6" stroke="#e89b2e" stroke-width="2"/><path d="M6.5 10.5l-.8 1.6" stroke="#c03a2b" stroke-width="1.4"/></svg>
<div class="t m" style="left:943px;top:608px;color:#111;letter-spacing:-0.1px">Doprovodný text</div>
<div style="left:113px;top:324px;width:79px;height:30px;border:5px solid #e81828"></div>
<div style="left:899px;top:354px;width:47px;height:22px;border:5px solid #e81828"></div>
<div style="left:904px;top:583px;width:280px;height:15px;border:5px solid #e81828"></div>
<div style="left:1106px;top:618px;width:192px;height:21px;background:#ffffe1;border:1px solid #222"></div>
<div class="t m" style="left:1110.5px;top:620px;">Generování kontrolního listu</div>
</div>
</body></html>
